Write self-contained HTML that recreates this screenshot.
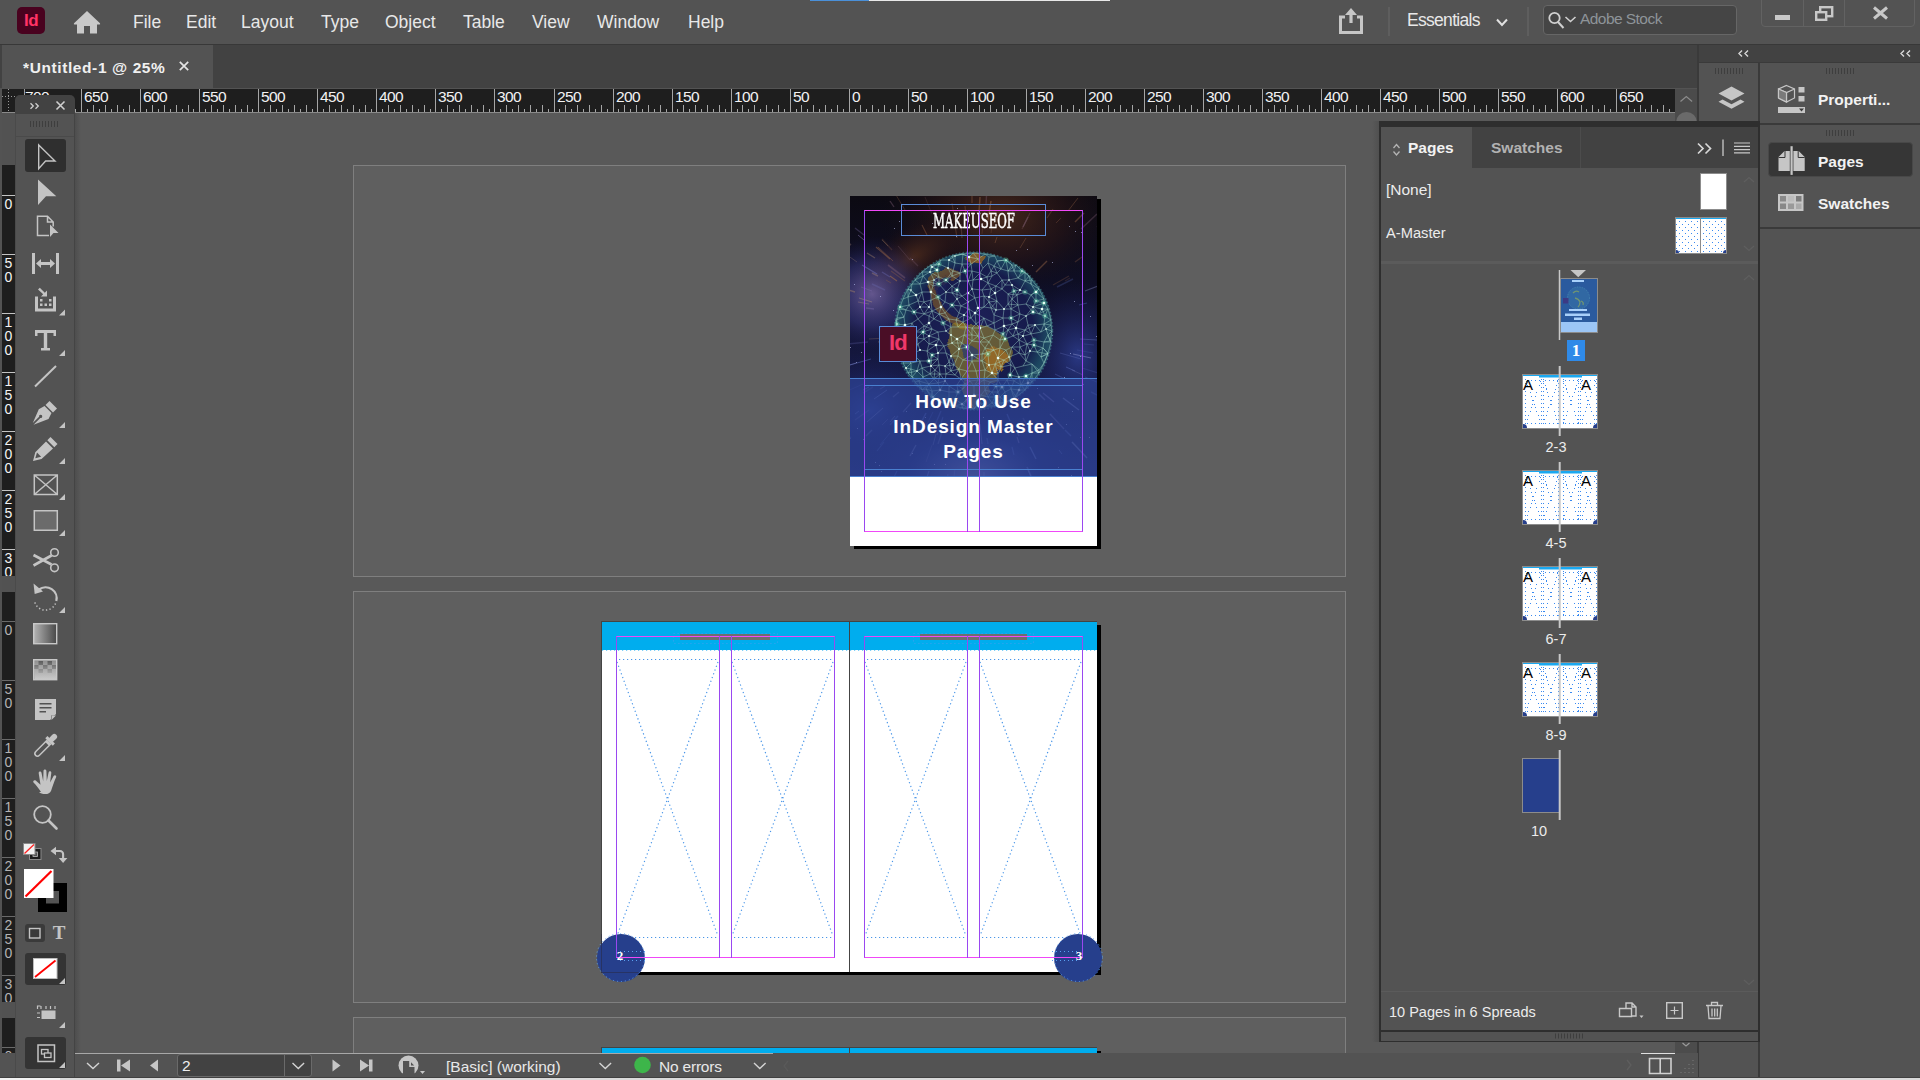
<!DOCTYPE html>
<html lang="en">
<head>
<meta charset="utf-8">
<title>InDesign - Untitled-1</title>
<style>
*{box-sizing:border-box;margin:0;padding:0}
html,body{width:1920px;height:1080px;overflow:hidden;background:#535353;font-family:"Liberation Sans",sans-serif;color:#e6e6e6}
.abs{position:absolute}
#app{position:absolute;left:0;top:0;width:1920px;height:1080px;overflow:hidden;background:#535353}
/* top bar */
#topbar{left:0;top:0;width:1920px;height:44px;background:#535353}
#topline{left:0;top:44px;width:1920px;height:1px;background:#383838}
.menu{top:10px;font-size:17.5px;line-height:24px;color:#e8e8e8;white-space:nowrap}
/* tab bar */
#tabbar{left:0;top:45px;width:1698px;height:43px;background:#424242}
#tab{left:2px;top:45px;width:211px;height:43px;background:#535353}
#tabtxt{left:23px;top:58px;font-size:15.5px;letter-spacing:0.6px;font-weight:bold;line-height:20px;color:#f0f0f0;white-space:nowrap}
#hruler i{position:absolute;width:1px;background:#a6a6a6}
#vruler b{position:absolute;left:0;width:13px;height:1px}
/* rulers */
#hruler{left:2px;top:89px;width:1673px;height:23px;background:#1e1e1e;overflow:hidden}
#hrulerline{left:2px;top:112px;width:1673px;height:1px;background:#8a8a8a}
#vruler{left:2px;top:113px;width:13px;height:940px;background:#1e1e1e;overflow:hidden}
.rl{position:absolute;top:0px;letter-spacing:-0.6px;font-size:15.5px;line-height:16px;color:#f2f2f2;white-space:nowrap}
.vl{position:absolute;left:0px;width:13px;font-size:14px;line-height:12px;color:#f2f2f2;text-align:center}
/* canvas */
#canvas{left:15px;top:113px;width:1660px;height:940px;background:#595959;overflow:hidden}
.paste{position:absolute;width:993px;height:412px;background:#5f5f5f;border:1px solid #7f7f7f}
/* status bar */
#status{left:0;top:1053px;width:1698px;height:24px;background:#535353}
#bottomline{left:0;top:1077px;width:1920px;height:3px;background:#dadada;border-top:1px solid #404040}
/* right docks */
#dockhdr{left:1699px;top:45px;width:221px;height:18px;background:#424242}
#dock1{left:1700px;top:63px;width:58px;height:1014px;background:#535353}
#dock2{left:1760px;top:63px;width:160px;height:1014px;background:#535353}
.sep{background:#3a3a3a}
.dk{font-weight:bold;font-size:15.500px;line-height:20px;color:#f2f2f2;white-space:nowrap}
.pt{line-height:20px;color:#ececec;white-space:nowrap}
</style>
</head>
<body>
<div id="app">
<!-- TOPBAR -->
<div id="topbar" class="abs"></div>
<div class="abs" style="left:810px;top:0;width:59px;height:1px;background:#4a90d9"></div>
<div class="abs" style="left:869px;top:0;width:241px;height:1px;background:#e8e8e8"></div>
<div id="topline" class="abs"></div>
<div class="abs" id="idlogo" style="left:17px;top:7px;width:28px;height:27px;border-radius:5px;background:#49021f"></div>
<div class="abs" style="left:17px;top:7px;width:28px;height:27px;text-align:center;font-weight:bold;font-size:17px;line-height:27px;color:#ff3366;letter-spacing:-0.5px">Id</div>
<svg class="abs" style="left:72px;top:9px" width="30" height="26" viewBox="0 0 30 26"><path d="M15 2 L28 14.2 Q28.6 15.4 27.4 15.6 L25 15.6 L25 24.5 L18 24.5 L18 17 L12 17 L12 24.5 L5 24.5 L5 15.6 L2.6 15.6 Q1.4 15.4 2 14.2 Z" fill="#c9c9c9"/></svg>
<div class="abs menu" style="left:133px">File</div>
<div class="abs menu" style="left:186px">Edit</div>
<div class="abs menu" style="left:241px">Layout</div>
<div class="abs menu" style="left:321px">Type</div>
<div class="abs menu" style="left:385px">Object</div>
<div class="abs menu" style="left:463px">Table</div>
<div class="abs menu" style="left:532px">View</div>
<div class="abs menu" style="left:597px">Window</div>
<div class="abs menu" style="left:688px">Help</div>
<!-- share -->
<svg class="abs" style="left:1337px;top:6px" width="28" height="30" viewBox="0 0 28 30"><path d="M8 11 H3.5 V26.5 H24.5 V11 H20" fill="none" stroke="#c6c6c6" stroke-width="3"/><path d="M14 2 L20 9 H15.600 V17 H12.400 V9 H8 Z" fill="#c6c6c6"/></svg>
<div class="abs" style="left:1388px;top:7px;width:2px;height:29px;background:#5e5e5e"></div>
<div class="abs menu" style="left:1407px;top:8px;font-size:17.5px;letter-spacing:-0.7px">Essentials</div>
<svg class="abs" style="left:1495px;top:17px" width="14" height="11" viewBox="0 0 14 11"><path d="M2 2.5 L7 8 L12 2.5" fill="none" stroke="#e0e0e0" stroke-width="2"/></svg>
<div class="abs" style="left:1527px;top:7px;width:2px;height:29px;background:#5e5e5e"></div>
<div class="abs" style="left:1543px;top:5px;width:194px;height:30px;border:1px solid #666;border-radius:4px;background:#454545"></div>
<svg class="abs" style="left:1546px;top:9px" width="34" height="22" viewBox="0 0 34 22"><circle cx="8.5" cy="9" r="5.2" fill="none" stroke="#d0d0d0" stroke-width="1.8"/><path d="M12 13 L17.5 19" stroke="#d0d0d0" stroke-width="2"/><path d="M19.5 8 L24.5 12.5 L29.5 8" fill="none" stroke="#d0d0d0" stroke-width="1.6"/></svg>
<div class="abs" style="left:1580px;top:8px;font-size:15.5px;letter-spacing:-0.55px;line-height:22px;color:#8e9499;white-space:nowrap">Adobe Stock</div>
<!-- window controls -->
<div class="abs" style="left:1761px;top:-4px;width:154px;height:31px;border:1px solid #626262;border-radius:4px"></div>
<div class="abs" style="left:1803px;top:0;width:1px;height:26px;background:#626262"></div>
<div class="abs" style="left:1844px;top:0;width:1px;height:26px;background:#626262"></div>
<div class="abs" style="left:1775px;top:15px;width:15px;height:5px;background:#c8c8c8"></div>
<svg class="abs" style="left:1814px;top:5px" width="20" height="17" viewBox="0 0 20 17"><rect x="6.2" y="2.2" width="12" height="9" fill="none" stroke="#c8c8c8" stroke-width="2.4"/><rect x="2.2" y="7.2" width="10" height="7.6" fill="#535353" stroke="#c8c8c8" stroke-width="2.4"/></svg>
<svg class="abs" style="left:1872px;top:6px" width="17" height="14" viewBox="0 0 17 14"><path d="M2 1.5 L15 12.5 M15 1.5 L2 12.5" stroke="#c8c8c8" stroke-width="3"/></svg>

<!-- TABBAR -->
<div id="tabbar" class="abs"></div>
<div id="tab" class="abs"></div>
<div id="tabtxt" class="abs">*Untitled-1 @ 25%</div>
<svg class="abs" style="left:178px;top:60px" width="12" height="12" viewBox="0 0 12 12"><path d="M1.8 1.8 L10.2 10.2 M10.2 1.8 L1.8 10.2" stroke="#e4e4e4" stroke-width="1.7"/></svg>
<!-- scrollbar column right of ruler -->
<div class="abs" style="left:1675px;top:89px;width:22px;height:964px;background:#4b4b4b"></div>
<svg class="abs" style="left:1675px;top:89px" width="22" height="40" viewBox="0 0 22 40" fill="none"><path d="M5.500 12.500l5.800-5l5.800 5" stroke="#8c8c8c" stroke-width="1.200"/><rect x="1" y="23" width="21" height="60" rx="10.500" fill="#6a6a6a"/></svg>
<div class="abs" style="left:1697px;top:45px;width:2px;height:1032px;background:#3a3a3a"></div>

<!-- RULERS -->
<div id="hruler" class="abs">
<i style="left:20px;top:0;height:23px"></i><span class="rl" style="left:23px">700</span><i style="left:26px;top:20px;height:3px"></i><i style="left:32px;top:16px;height:7px"></i><i style="left:38px;top:20px;height:3px"></i><i style="left:44px;top:16px;height:7px"></i><i style="left:50px;top:20px;height:3px"></i><i style="left:56px;top:16px;height:7px"></i><i style="left:62px;top:20px;height:3px"></i><i style="left:68px;top:16px;height:7px"></i><i style="left:73px;top:20px;height:3px"></i><i style="left:79px;top:0;height:23px"></i><span class="rl" style="left:82px">650</span><i style="left:85px;top:20px;height:3px"></i><i style="left:91px;top:16px;height:7px"></i><i style="left:97px;top:20px;height:3px"></i><i style="left:103px;top:16px;height:7px"></i><i style="left:109px;top:20px;height:3px"></i><i style="left:115px;top:16px;height:7px"></i><i style="left:121px;top:20px;height:3px"></i><i style="left:127px;top:16px;height:7px"></i><i style="left:132px;top:20px;height:3px"></i><i style="left:138px;top:0;height:23px"></i><span class="rl" style="left:141px">600</span><i style="left:144px;top:20px;height:3px"></i><i style="left:150px;top:16px;height:7px"></i><i style="left:156px;top:20px;height:3px"></i><i style="left:162px;top:16px;height:7px"></i><i style="left:168px;top:20px;height:3px"></i><i style="left:174px;top:16px;height:7px"></i><i style="left:180px;top:20px;height:3px"></i><i style="left:186px;top:16px;height:7px"></i><i style="left:191px;top:20px;height:3px"></i><i style="left:197px;top:0;height:23px"></i><span class="rl" style="left:200px">550</span><i style="left:203px;top:20px;height:3px"></i><i style="left:209px;top:16px;height:7px"></i><i style="left:215px;top:20px;height:3px"></i><i style="left:221px;top:16px;height:7px"></i><i style="left:227px;top:20px;height:3px"></i><i style="left:233px;top:16px;height:7px"></i><i style="left:239px;top:20px;height:3px"></i><i style="left:245px;top:16px;height:7px"></i><i style="left:250px;top:20px;height:3px"></i><i style="left:256px;top:0;height:23px"></i><span class="rl" style="left:259px">500</span><i style="left:262px;top:20px;height:3px"></i><i style="left:268px;top:16px;height:7px"></i><i style="left:274px;top:20px;height:3px"></i><i style="left:280px;top:16px;height:7px"></i><i style="left:286px;top:20px;height:3px"></i><i style="left:292px;top:16px;height:7px"></i><i style="left:298px;top:20px;height:3px"></i><i style="left:304px;top:16px;height:7px"></i><i style="left:310px;top:20px;height:3px"></i><i style="left:315px;top:0;height:23px"></i><span class="rl" style="left:318px">450</span><i style="left:321px;top:20px;height:3px"></i><i style="left:327px;top:16px;height:7px"></i><i style="left:333px;top:20px;height:3px"></i><i style="left:339px;top:16px;height:7px"></i><i style="left:345px;top:20px;height:3px"></i><i style="left:351px;top:16px;height:7px"></i><i style="left:357px;top:20px;height:3px"></i><i style="left:363px;top:16px;height:7px"></i><i style="left:369px;top:20px;height:3px"></i><i style="left:374px;top:0;height:23px"></i><span class="rl" style="left:377px">400</span><i style="left:380px;top:20px;height:3px"></i><i style="left:386px;top:16px;height:7px"></i><i style="left:392px;top:20px;height:3px"></i><i style="left:398px;top:16px;height:7px"></i><i style="left:404px;top:20px;height:3px"></i><i style="left:410px;top:16px;height:7px"></i><i style="left:416px;top:20px;height:3px"></i><i style="left:422px;top:16px;height:7px"></i><i style="left:428px;top:20px;height:3px"></i><i style="left:433px;top:0;height:23px"></i><span class="rl" style="left:436px">350</span><i style="left:439px;top:20px;height:3px"></i><i style="left:445px;top:16px;height:7px"></i><i style="left:451px;top:20px;height:3px"></i><i style="left:457px;top:16px;height:7px"></i><i style="left:463px;top:20px;height:3px"></i><i style="left:469px;top:16px;height:7px"></i><i style="left:475px;top:20px;height:3px"></i><i style="left:481px;top:16px;height:7px"></i><i style="left:487px;top:20px;height:3px"></i><i style="left:492px;top:0;height:23px"></i><span class="rl" style="left:495px">300</span><i style="left:498px;top:20px;height:3px"></i><i style="left:504px;top:16px;height:7px"></i><i style="left:510px;top:20px;height:3px"></i><i style="left:516px;top:16px;height:7px"></i><i style="left:522px;top:20px;height:3px"></i><i style="left:528px;top:16px;height:7px"></i><i style="left:534px;top:20px;height:3px"></i><i style="left:540px;top:16px;height:7px"></i><i style="left:546px;top:20px;height:3px"></i><i style="left:552px;top:0;height:23px"></i><span class="rl" style="left:555px">250</span><i style="left:557px;top:20px;height:3px"></i><i style="left:563px;top:16px;height:7px"></i><i style="left:569px;top:20px;height:3px"></i><i style="left:575px;top:16px;height:7px"></i><i style="left:581px;top:20px;height:3px"></i><i style="left:587px;top:16px;height:7px"></i><i style="left:593px;top:20px;height:3px"></i><i style="left:599px;top:16px;height:7px"></i><i style="left:605px;top:20px;height:3px"></i><i style="left:611px;top:0;height:23px"></i><span class="rl" style="left:614px">200</span><i style="left:616px;top:20px;height:3px"></i><i style="left:622px;top:16px;height:7px"></i><i style="left:628px;top:20px;height:3px"></i><i style="left:634px;top:16px;height:7px"></i><i style="left:640px;top:20px;height:3px"></i><i style="left:646px;top:16px;height:7px"></i><i style="left:652px;top:20px;height:3px"></i><i style="left:658px;top:16px;height:7px"></i><i style="left:664px;top:20px;height:3px"></i><i style="left:670px;top:0;height:23px"></i><span class="rl" style="left:673px">150</span><i style="left:675px;top:20px;height:3px"></i><i style="left:681px;top:16px;height:7px"></i><i style="left:687px;top:20px;height:3px"></i><i style="left:693px;top:16px;height:7px"></i><i style="left:699px;top:20px;height:3px"></i><i style="left:705px;top:16px;height:7px"></i><i style="left:711px;top:20px;height:3px"></i><i style="left:717px;top:16px;height:7px"></i><i style="left:723px;top:20px;height:3px"></i><i style="left:729px;top:0;height:23px"></i><span class="rl" style="left:732px">100</span><i style="left:735px;top:20px;height:3px"></i><i style="left:740px;top:16px;height:7px"></i><i style="left:746px;top:20px;height:3px"></i><i style="left:752px;top:16px;height:7px"></i><i style="left:758px;top:20px;height:3px"></i><i style="left:764px;top:16px;height:7px"></i><i style="left:770px;top:20px;height:3px"></i><i style="left:776px;top:16px;height:7px"></i><i style="left:782px;top:20px;height:3px"></i><i style="left:788px;top:0;height:23px"></i><span class="rl" style="left:791px">50</span><i style="left:794px;top:20px;height:3px"></i><i style="left:799px;top:16px;height:7px"></i><i style="left:805px;top:20px;height:3px"></i><i style="left:811px;top:16px;height:7px"></i><i style="left:817px;top:20px;height:3px"></i><i style="left:823px;top:16px;height:7px"></i><i style="left:829px;top:20px;height:3px"></i><i style="left:835px;top:16px;height:7px"></i><i style="left:841px;top:20px;height:3px"></i><i style="left:847px;top:0;height:23px"></i><span class="rl" style="left:850px">0</span><i style="left:853px;top:20px;height:3px"></i><i style="left:858px;top:16px;height:7px"></i><i style="left:864px;top:20px;height:3px"></i><i style="left:870px;top:16px;height:7px"></i><i style="left:876px;top:20px;height:3px"></i><i style="left:882px;top:16px;height:7px"></i><i style="left:888px;top:20px;height:3px"></i><i style="left:894px;top:16px;height:7px"></i><i style="left:900px;top:20px;height:3px"></i><i style="left:906px;top:0;height:23px"></i><span class="rl" style="left:909px">50</span><i style="left:912px;top:20px;height:3px"></i><i style="left:917px;top:16px;height:7px"></i><i style="left:923px;top:20px;height:3px"></i><i style="left:929px;top:16px;height:7px"></i><i style="left:935px;top:20px;height:3px"></i><i style="left:941px;top:16px;height:7px"></i><i style="left:947px;top:20px;height:3px"></i><i style="left:953px;top:16px;height:7px"></i><i style="left:959px;top:20px;height:3px"></i><i style="left:965px;top:0;height:23px"></i><span class="rl" style="left:968px">100</span><i style="left:971px;top:20px;height:3px"></i><i style="left:977px;top:16px;height:7px"></i><i style="left:982px;top:20px;height:3px"></i><i style="left:988px;top:16px;height:7px"></i><i style="left:994px;top:20px;height:3px"></i><i style="left:1000px;top:16px;height:7px"></i><i style="left:1006px;top:20px;height:3px"></i><i style="left:1012px;top:16px;height:7px"></i><i style="left:1018px;top:20px;height:3px"></i><i style="left:1024px;top:0;height:23px"></i><span class="rl" style="left:1027px">150</span><i style="left:1030px;top:20px;height:3px"></i><i style="left:1036px;top:16px;height:7px"></i><i style="left:1041px;top:20px;height:3px"></i><i style="left:1047px;top:16px;height:7px"></i><i style="left:1053px;top:20px;height:3px"></i><i style="left:1059px;top:16px;height:7px"></i><i style="left:1065px;top:20px;height:3px"></i><i style="left:1071px;top:16px;height:7px"></i><i style="left:1077px;top:20px;height:3px"></i><i style="left:1083px;top:0;height:23px"></i><span class="rl" style="left:1086px">200</span><i style="left:1089px;top:20px;height:3px"></i><i style="left:1095px;top:16px;height:7px"></i><i style="left:1100px;top:20px;height:3px"></i><i style="left:1106px;top:16px;height:7px"></i><i style="left:1112px;top:20px;height:3px"></i><i style="left:1118px;top:16px;height:7px"></i><i style="left:1124px;top:20px;height:3px"></i><i style="left:1130px;top:16px;height:7px"></i><i style="left:1136px;top:20px;height:3px"></i><i style="left:1142px;top:0;height:23px"></i><span class="rl" style="left:1145px">250</span><i style="left:1148px;top:20px;height:3px"></i><i style="left:1154px;top:16px;height:7px"></i><i style="left:1159px;top:20px;height:3px"></i><i style="left:1165px;top:16px;height:7px"></i><i style="left:1171px;top:20px;height:3px"></i><i style="left:1177px;top:16px;height:7px"></i><i style="left:1183px;top:20px;height:3px"></i><i style="left:1189px;top:16px;height:7px"></i><i style="left:1195px;top:20px;height:3px"></i><i style="left:1201px;top:0;height:23px"></i><span class="rl" style="left:1204px">300</span><i style="left:1207px;top:20px;height:3px"></i><i style="left:1213px;top:16px;height:7px"></i><i style="left:1219px;top:20px;height:3px"></i><i style="left:1224px;top:16px;height:7px"></i><i style="left:1230px;top:20px;height:3px"></i><i style="left:1236px;top:16px;height:7px"></i><i style="left:1242px;top:20px;height:3px"></i><i style="left:1248px;top:16px;height:7px"></i><i style="left:1254px;top:20px;height:3px"></i><i style="left:1260px;top:0;height:23px"></i><span class="rl" style="left:1263px">350</span><i style="left:1266px;top:20px;height:3px"></i><i style="left:1272px;top:16px;height:7px"></i><i style="left:1278px;top:20px;height:3px"></i><i style="left:1283px;top:16px;height:7px"></i><i style="left:1289px;top:20px;height:3px"></i><i style="left:1295px;top:16px;height:7px"></i><i style="left:1301px;top:20px;height:3px"></i><i style="left:1307px;top:16px;height:7px"></i><i style="left:1313px;top:20px;height:3px"></i><i style="left:1319px;top:0;height:23px"></i><span class="rl" style="left:1322px">400</span><i style="left:1325px;top:20px;height:3px"></i><i style="left:1331px;top:16px;height:7px"></i><i style="left:1337px;top:20px;height:3px"></i><i style="left:1342px;top:16px;height:7px"></i><i style="left:1348px;top:20px;height:3px"></i><i style="left:1354px;top:16px;height:7px"></i><i style="left:1360px;top:20px;height:3px"></i><i style="left:1366px;top:16px;height:7px"></i><i style="left:1372px;top:20px;height:3px"></i><i style="left:1378px;top:0;height:23px"></i><span class="rl" style="left:1381px">450</span><i style="left:1384px;top:20px;height:3px"></i><i style="left:1390px;top:16px;height:7px"></i><i style="left:1396px;top:20px;height:3px"></i><i style="left:1401px;top:16px;height:7px"></i><i style="left:1407px;top:20px;height:3px"></i><i style="left:1413px;top:16px;height:7px"></i><i style="left:1419px;top:20px;height:3px"></i><i style="left:1425px;top:16px;height:7px"></i><i style="left:1431px;top:20px;height:3px"></i><i style="left:1437px;top:0;height:23px"></i><span class="rl" style="left:1440px">500</span><i style="left:1443px;top:20px;height:3px"></i><i style="left:1449px;top:16px;height:7px"></i><i style="left:1455px;top:20px;height:3px"></i><i style="left:1461px;top:16px;height:7px"></i><i style="left:1466px;top:20px;height:3px"></i><i style="left:1472px;top:16px;height:7px"></i><i style="left:1478px;top:20px;height:3px"></i><i style="left:1484px;top:16px;height:7px"></i><i style="left:1490px;top:20px;height:3px"></i><i style="left:1496px;top:0;height:23px"></i><span class="rl" style="left:1499px">550</span><i style="left:1502px;top:20px;height:3px"></i><i style="left:1508px;top:16px;height:7px"></i><i style="left:1514px;top:20px;height:3px"></i><i style="left:1520px;top:16px;height:7px"></i><i style="left:1525px;top:20px;height:3px"></i><i style="left:1531px;top:16px;height:7px"></i><i style="left:1537px;top:20px;height:3px"></i><i style="left:1543px;top:16px;height:7px"></i><i style="left:1549px;top:20px;height:3px"></i><i style="left:1555px;top:0;height:23px"></i><span class="rl" style="left:1558px">600</span><i style="left:1561px;top:20px;height:3px"></i><i style="left:1567px;top:16px;height:7px"></i><i style="left:1573px;top:20px;height:3px"></i><i style="left:1579px;top:16px;height:7px"></i><i style="left:1584px;top:20px;height:3px"></i><i style="left:1590px;top:16px;height:7px"></i><i style="left:1596px;top:20px;height:3px"></i><i style="left:1602px;top:16px;height:7px"></i><i style="left:1608px;top:20px;height:3px"></i><i style="left:1614px;top:0;height:23px"></i><span class="rl" style="left:1617px">650</span><i style="left:1620px;top:20px;height:3px"></i><i style="left:1626px;top:16px;height:7px"></i><i style="left:1632px;top:20px;height:3px"></i><i style="left:1638px;top:16px;height:7px"></i><i style="left:1643px;top:20px;height:3px"></i><i style="left:1649px;top:16px;height:7px"></i><i style="left:1655px;top:20px;height:3px"></i><i style="left:1661px;top:16px;height:7px"></i><i style="left:1667px;top:20px;height:3px"></i>
<div style="position:absolute;left:0;top:0;width:23px;height:24px;background:#1e1e1e;border-right:1px solid #9a9a9a"></div>
<div style="position:absolute;left:6px;top:0;width:1px;height:24px;background:repeating-linear-gradient(to bottom,#9a9a9a 0 1px,transparent 1px 3px)"></div>
<div style="position:absolute;left:0;top:7px;width:23px;height:1px;background:repeating-linear-gradient(to right,#9a9a9a 0 1px,transparent 1px 3px)"></div>
</div>
<div id="hrulerline" class="abs"></div>
<div id="vruler" class="abs">
<div style="position:absolute;left:0;top:0;width:13px;height:52px;background:#525252"></div>
<div style="position:absolute;left:0;top:52px;width:13px;height:411px;overflow:hidden"><div style="position:absolute;left:0;top:-52px;width:13px;height:2000px"><b style="top:82px;background:#c4c4c4"></b><span class="vl" style="top:85px;color:#f4f4f4">0</span><b style="top:141px;background:#c4c4c4"></b><span class="vl" style="top:144px;color:#f4f4f4">5</span><span class="vl" style="top:158px;color:#f4f4f4">0</span><b style="top:200px;background:#c4c4c4"></b><span class="vl" style="top:203px;color:#f4f4f4">1</span><span class="vl" style="top:217px;color:#f4f4f4">0</span><span class="vl" style="top:231px;color:#f4f4f4">0</span><b style="top:259px;background:#c4c4c4"></b><span class="vl" style="top:262px;color:#f4f4f4">1</span><span class="vl" style="top:276px;color:#f4f4f4">5</span><span class="vl" style="top:290px;color:#f4f4f4">0</span><b style="top:318px;background:#c4c4c4"></b><span class="vl" style="top:321px;color:#f4f4f4">2</span><span class="vl" style="top:335px;color:#f4f4f4">0</span><span class="vl" style="top:349px;color:#f4f4f4">0</span><b style="top:377px;background:#c4c4c4"></b><span class="vl" style="top:380px;color:#f4f4f4">2</span><span class="vl" style="top:394px;color:#f4f4f4">5</span><span class="vl" style="top:408px;color:#f4f4f4">0</span><b style="top:436px;background:#c4c4c4"></b><span class="vl" style="top:439px;color:#f4f4f4">3</span><span class="vl" style="top:453px;color:#f4f4f4">0</span><span class="vl" style="top:467px;color:#f4f4f4">0</span></div></div>
<div style="position:absolute;left:0;top:463px;width:13px;height:16px;background:#525252"></div>
<div style="position:absolute;left:0;top:479px;width:13px;height:410px;overflow:hidden"><div style="position:absolute;left:0;top:-479px;width:13px;height:2000px"><b style="top:508px;background:#6a6a6a"></b><span class="vl" style="top:511px;color:#b4b4b4">0</span><b style="top:567px;background:#6a6a6a"></b><span class="vl" style="top:570px;color:#b4b4b4">5</span><span class="vl" style="top:584px;color:#b4b4b4">0</span><b style="top:626px;background:#6a6a6a"></b><span class="vl" style="top:629px;color:#b4b4b4">1</span><span class="vl" style="top:643px;color:#b4b4b4">0</span><span class="vl" style="top:657px;color:#b4b4b4">0</span><b style="top:685px;background:#6a6a6a"></b><span class="vl" style="top:688px;color:#b4b4b4">1</span><span class="vl" style="top:702px;color:#b4b4b4">5</span><span class="vl" style="top:716px;color:#b4b4b4">0</span><b style="top:744px;background:#6a6a6a"></b><span class="vl" style="top:747px;color:#b4b4b4">2</span><span class="vl" style="top:761px;color:#b4b4b4">0</span><span class="vl" style="top:775px;color:#b4b4b4">0</span><b style="top:803px;background:#6a6a6a"></b><span class="vl" style="top:806px;color:#b4b4b4">2</span><span class="vl" style="top:820px;color:#b4b4b4">5</span><span class="vl" style="top:834px;color:#b4b4b4">0</span><b style="top:862px;background:#6a6a6a"></b><span class="vl" style="top:865px;color:#b4b4b4">3</span><span class="vl" style="top:879px;color:#b4b4b4">0</span><span class="vl" style="top:893px;color:#b4b4b4">0</span></div></div>
<div style="position:absolute;left:0;top:889px;width:13px;height:16px;background:#525252"></div>
<div style="position:absolute;left:0;top:905px;width:13px;height:35px;overflow:hidden"><div style="position:absolute;left:0;top:-905px;width:13px;height:2000px"><b style="top:934px;background:#6a6a6a"></b><span class="vl" style="top:937px;color:#b4b4b4">0</span></div></div>
</div>

<!-- CANVAS -->
<div id="canvas" class="abs"><div style="position:absolute;left:-15px;top:-113px;width:1920px;height:1080px">
<div class="paste" style="left:353px;top:165px"></div>
<div class="paste" style="left:353px;top:591px"></div>
<div class="paste" style="left:353px;top:1017px"></div>
<div class="abs" style="left:854px;top:199px;width:247px;height:350px;background:#000"></div>
<div class="abs" style="left:850px;top:196px;width:247px;height:350px;background:#fff;overflow:hidden">
<svg width="248" height="281" viewBox="0 0 248 281" preserveAspectRatio="none" style="position:absolute;left:0;top:0;display:block"><defs><radialGradient id="cg1" cx="0.5" cy="0.5" r="0.5"><stop offset="0" stop-color="#4a2a1c" stop-opacity="0.95"/><stop offset="0.55" stop-color="#2a1616" stop-opacity="0.6"/><stop offset="1" stop-color="#120c14" stop-opacity="0"/></radialGradient><radialGradient id="cg2" cx="0.5" cy="0.5" r="0.5"><stop offset="0" stop-color="#7868a8" stop-opacity="0.8"/><stop offset="0.55" stop-color="#3c3c86" stop-opacity="0.5"/><stop offset="1" stop-color="#1a1a50" stop-opacity="0"/></radialGradient><radialGradient id="cg3" cx="0.5" cy="0.5" r="0.5"><stop offset="0" stop-color="#2c3c8c" stop-opacity="0.9"/><stop offset="1" stop-color="#14184a" stop-opacity="0"/></radialGradient><radialGradient id="cg4" cx="0.5" cy="0.5" r="0.5"><stop offset="0" stop-color="#9088b0" stop-opacity="0.75"/><stop offset="1" stop-color="#5a5a98" stop-opacity="0"/></radialGradient><radialGradient id="cgl" cx="0.5" cy="0.48" r="0.52"><stop offset="0" stop-color="#1e2258"/><stop offset="0.72" stop-color="#161b4c"/><stop offset="0.9" stop-color="#1c4660"/><stop offset="1" stop-color="#2b6e78" stop-opacity="0.5"/></radialGradient><linearGradient id="cbt" x1="0" y1="0" x2="0" y2="1"><stop offset="0" stop-color="#0c0a12"/><stop offset="0.3" stop-color="#0e0e24"/><stop offset="0.65" stop-color="#161a46"/><stop offset="1" stop-color="#222a68"/></linearGradient><clipPath id="ccp"><circle cx="123.5" cy="135" r="79"/></clipPath><filter id="crf" x="-10%" y="-10%" width="120%" height="120%"><feTurbulence type="fractalNoise" baseFrequency="0.09" numOctaves="2" seed="4"/><feDisplacementMap in="SourceGraphic" scale="9"/></filter></defs><rect width="248" height="281" fill="url(#cbt)"/><ellipse cx="150" cy="20" rx="120" ry="80" fill="url(#cg1)"/><ellipse cx="62" cy="62" rx="70" ry="34" transform="rotate(-32 62 62)" fill="url(#cg1)"/><ellipse cx="22" cy="98" rx="62" ry="58" fill="url(#cg2)"/><ellipse cx="228" cy="160" rx="55" ry="75" fill="url(#cg3)"/><ellipse cx="20" cy="215" rx="70" ry="60" fill="url(#cg3)"/><ellipse cx="124" cy="262" rx="150" ry="62" fill="url(#cg3)"/><ellipse cx="124" cy="285" rx="70" ry="45" fill="url(#cg4)"/><g><path d="M-0 173L-20 179" stroke="#4a5aa8" stroke-opacity="0.41" stroke-width="1.5"/><path d="M178 274L183 286" stroke="#8a90c8" stroke-opacity="0.53" stroke-width="0.8"/><path d="M93 221L87 239" stroke="#5a6ab8" stroke-opacity="0.46" stroke-width="1.1"/><path d="M-14 177L-29 182" stroke="#8a90c8" stroke-opacity="0.26" stroke-width="1.2"/><path d="M216 171L225 175" stroke="#5a6ab8" stroke-opacity="0.52" stroke-width="1.0"/><path d="M40 81L32 76" stroke="#6a6ab0" stroke-opacity="0.42" stroke-width="1.3"/><path d="M21 163L-0 169" stroke="#5a6ab8" stroke-opacity="0.50" stroke-width="1.0"/><path d="M137 242L138 248" stroke="#5a6ab8" stroke-opacity="0.39" stroke-width="1.5"/><path d="M1 241L-13 253" stroke="#5a6ab8" stroke-opacity="0.32" stroke-width="1.5"/><path d="M232 172L248 177" stroke="#4a5aa8" stroke-opacity="0.28" stroke-width="1.3"/><path d="M142 31L144 24" stroke="#6a4a4a" stroke-opacity="0.26" stroke-width="1.1"/><path d="M207 91L223 83" stroke="#5a6ab8" stroke-opacity="0.27" stroke-width="1.4"/><path d="M180 251L186 263" stroke="#6a78c0" stroke-opacity="0.59" stroke-width="1.4"/><path d="M23 191L13 197" stroke="#6a78c0" stroke-opacity="0.25" stroke-width="1.5"/><path d="M254 114L276 111" stroke="#5a6ab8" stroke-opacity="0.32" stroke-width="1.1"/><path d="M206 27L211 22" stroke="#a06a48" stroke-opacity="0.32" stroke-width="0.9"/><path d="M139 25L141 16" stroke="#8a5a40" stroke-opacity="0.28" stroke-width="0.9"/><path d="M68 70L60 62" stroke="#7a5a70" stroke-opacity="0.29" stroke-width="1.2"/><path d="M170 52L176 42" stroke="#a06a48" stroke-opacity="0.36" stroke-width="0.9"/><path d="M14 44L8 39" stroke="#8a78b8" stroke-opacity="0.49" stroke-width="1.0"/><path d="M34 145L28 146" stroke="#a08068" stroke-opacity="0.26" stroke-width="1.6"/><path d="M134 276L134 285" stroke="#8a90c8" stroke-opacity="0.42" stroke-width="1.2"/><path d="M271 65L277 62" stroke="#7a5a70" stroke-opacity="0.45" stroke-width="1.5"/><path d="M43 65L28 51" stroke="#a06a48" stroke-opacity="0.51" stroke-width="0.8"/><path d="M35 190L30 193" stroke="#7a70b0" stroke-opacity="0.38" stroke-width="1.2"/><path d="M200 218L214 233" stroke="#7a70b0" stroke-opacity="0.48" stroke-width="1.3"/><path d="M41 87L36 84" stroke="#8a5a40" stroke-opacity="0.42" stroke-width="1.0"/><path d="M91 215L85 229" stroke="#5a6ab8" stroke-opacity="0.42" stroke-width="1.4"/><path d="M54 285L52 290" stroke="#8a90c8" stroke-opacity="0.38" stroke-width="0.7"/><path d="M256 79L262 76" stroke="#6a4a4a" stroke-opacity="0.37" stroke-width="1.3"/><path d="M249 45L259 38" stroke="#8a5a40" stroke-opacity="0.55" stroke-width="1.2"/><path d="M42 54L32 43" stroke="#8a5a40" stroke-opacity="0.28" stroke-width="1.3"/><path d="M279 128L296 128" stroke="#4a5aa8" stroke-opacity="0.58" stroke-width="1.3"/><path d="M6 167L-7 171" stroke="#8a90c8" stroke-opacity="0.51" stroke-width="0.7"/><path d="M25 62L17 57" stroke="#a08068" stroke-opacity="0.42" stroke-width="1.3"/><path d="M215 85L220 82" stroke="#6a4a4a" stroke-opacity="0.30" stroke-width="1.3"/><path d="M-21 118L-31 117" stroke="#b09080" stroke-opacity="0.42" stroke-width="0.9"/><path d="M37 194L24 203" stroke="#6a78c0" stroke-opacity="0.56" stroke-width="1.0"/><path d="M28 80L22 77" stroke="#b09080" stroke-opacity="0.37" stroke-width="1.5"/><path d="M210 157L231 163" stroke="#6a78c0" stroke-opacity="0.29" stroke-width="1.1"/><path d="M259 67L269 62" stroke="#7a5a70" stroke-opacity="0.49" stroke-width="1.3"/><path d="M197 22L203 13" stroke="#8a5a40" stroke-opacity="0.35" stroke-width="1.2"/><path d="M77 39L72 29" stroke="#8a5a40" stroke-opacity="0.47" stroke-width="1.1"/><path d="M177 271L181 280" stroke="#6a78c0" stroke-opacity="0.53" stroke-width="1.6"/><path d="M193 197L204 206" stroke="#7a70b0" stroke-opacity="0.59" stroke-width="1.3"/><path d="M162 251L164 259" stroke="#5a6ab8" stroke-opacity="0.51" stroke-width="1.2"/><path d="M223 158L241 162" stroke="#8a90c8" stroke-opacity="0.49" stroke-width="1.2"/><path d="M14 39L5 32" stroke="#8a78b8" stroke-opacity="0.28" stroke-width="1.5"/><path d="M107 42L105 29" stroke="#8a5a40" stroke-opacity="0.38" stroke-width="1.2"/><path d="M231 33L247 18" stroke="#7a5a70" stroke-opacity="0.36" stroke-width="1.6"/><path d="M249 225L264 236" stroke="#5a6ab8" stroke-opacity="0.32" stroke-width="1.5"/><path d="M285 115L299 113" stroke="#7a70b0" stroke-opacity="0.34" stroke-width="1.3"/><path d="M248 147L253 148" stroke="#7a70b0" stroke-opacity="0.44" stroke-width="1.4"/><path d="M37 142L19 143" stroke="#a08068" stroke-opacity="0.40" stroke-width="0.7"/><path d="M-13 106L-33 102" stroke="#b09080" stroke-opacity="0.30" stroke-width="1.2"/><path d="M98 -15L96 -31" stroke="#7a5a70" stroke-opacity="0.45" stroke-width="1.3"/><path d="M129 16L130 1" stroke="#a06a48" stroke-opacity="0.43" stroke-width="1.5"/><path d="M22 95L11 91" stroke="#8a78b8" stroke-opacity="0.36" stroke-width="0.8"/><path d="M22 106L9 102" stroke="#b09080" stroke-opacity="0.44" stroke-width="1.2"/><path d="M55 82L38 69" stroke="#7a5a70" stroke-opacity="0.44" stroke-width="1.6"/><path d="M189 198L195 204" stroke="#8a90c8" stroke-opacity="0.41" stroke-width="1.5"/><path d="M160 24L163 15" stroke="#7a5a70" stroke-opacity="0.29" stroke-width="1.1"/><path d="M186 -9L192 -21" stroke="#6a4a4a" stroke-opacity="0.29" stroke-width="1.1"/><path d="M227 154L243 157" stroke="#5a6ab8" stroke-opacity="0.26" stroke-width="0.8"/><path d="M230 143L247 144" stroke="#6a78c0" stroke-opacity="0.47" stroke-width="0.8"/><path d="M112 42L111 28" stroke="#6a4a4a" stroke-opacity="0.50" stroke-width="1.3"/><path d="M186 76L197 65" stroke="#a06a48" stroke-opacity="0.44" stroke-width="1.5"/><path d="M24 113L16 112" stroke="#8a78b8" stroke-opacity="0.33" stroke-width="1.4"/><path d="M182 -11L186 -21" stroke="#6a4a4a" stroke-opacity="0.56" stroke-width="0.9"/><path d="M141 37L142 30" stroke="#a06a48" stroke-opacity="0.30" stroke-width="0.8"/><path d="M33 212L17 226" stroke="#8a90c8" stroke-opacity="0.53" stroke-width="0.8"/><path d="M9 215L5 218" stroke="#6a78c0" stroke-opacity="0.45" stroke-width="1.0"/><path d="M172 33L180 17" stroke="#6a4a4a" stroke-opacity="0.43" stroke-width="1.3"/><path d="M157 218L160 225" stroke="#5a6ab8" stroke-opacity="0.52" stroke-width="1.3"/><path d="M225 66L232 61" stroke="#8a5a40" stroke-opacity="0.32" stroke-width="1.5"/><path d="M282 125L289 125" stroke="#5a6ab8" stroke-opacity="0.30" stroke-width="1.3"/><path d="M205 178L215 183" stroke="#4a5aa8" stroke-opacity="0.43" stroke-width="1.1"/><path d="M55 85L41 75" stroke="#a06a48" stroke-opacity="0.31" stroke-width="1.1"/><path d="M116 18L115 10" stroke="#a06a48" stroke-opacity="0.28" stroke-width="1.4"/><path d="M83 216L74 234" stroke="#4a5aa8" stroke-opacity="0.45" stroke-width="0.9"/><path d="M27 78L12 69" stroke="#6a6ab0" stroke-opacity="0.57" stroke-width="1.4"/><path d="M150 -13L152 -24" stroke="#6a4a4a" stroke-opacity="0.56" stroke-width="1.3"/><path d="M139 -10L141 -22" stroke="#a06a48" stroke-opacity="0.27" stroke-width="1.0"/><path d="M40 152L29 154" stroke="#8a90c8" stroke-opacity="0.27" stroke-width="0.9"/><path d="M229 109L237 107" stroke="#4a5aa8" stroke-opacity="0.45" stroke-width="1.2"/><path d="M-3 240L-16 251" stroke="#5a6ab8" stroke-opacity="0.52" stroke-width="1.6"/><path d="M256 154L273 157" stroke="#7a70b0" stroke-opacity="0.41" stroke-width="1.2"/><path d="M133 -1L134 -6" stroke="#6a4a4a" stroke-opacity="0.34" stroke-width="1.5"/><path d="M5 96L-16 90" stroke="#a08068" stroke-opacity="0.47" stroke-width="1.4"/><path d="M241 196L257 204" stroke="#5a6ab8" stroke-opacity="0.39" stroke-width="1.5"/><path d="M1 242L-14 255" stroke="#8a90c8" stroke-opacity="0.46" stroke-width="0.8"/><path d="M235 95L248 90" stroke="#8a90c8" stroke-opacity="0.36" stroke-width="1.2"/><path d="M18 146L-2 148" stroke="#6a6ab0" stroke-opacity="0.26" stroke-width="1.4"/><path d="M7 66L-3 59" stroke="#b09080" stroke-opacity="0.27" stroke-width="1.0"/><path d="M19 214L5 224" stroke="#7a70b0" stroke-opacity="0.28" stroke-width="1.5"/><path d="M13 188L-7 197" stroke="#6a78c0" stroke-opacity="0.27" stroke-width="0.8"/><path d="M182 -12L184 -18" stroke="#a06a48" stroke-opacity="0.46" stroke-width="0.8"/><path d="M38 50L32 44" stroke="#a08068" stroke-opacity="0.37" stroke-width="0.8"/><path d="M61 207L53 216" stroke="#8a90c8" stroke-opacity="0.34" stroke-width="1.2"/><path d="M-5 206L-17 213" stroke="#6a78c0" stroke-opacity="0.58" stroke-width="1.4"/><path d="M130 228L132 248" stroke="#8a90c8" stroke-opacity="0.47" stroke-width="1.0"/><path d="M105 273L103 288" stroke="#8a90c8" stroke-opacity="0.32" stroke-width="1.0"/><path d="M134 296L135 309" stroke="#6a78c0" stroke-opacity="0.56" stroke-width="0.7"/><path d="M222 174L233 179" stroke="#8a90c8" stroke-opacity="0.26" stroke-width="0.9"/><path d="M98 278L94 298" stroke="#6a78c0" stroke-opacity="0.44" stroke-width="1.3"/><path d="M38 223L32 229" stroke="#7a70b0" stroke-opacity="0.42" stroke-width="0.8"/><path d="M225 26L234 17" stroke="#a06a48" stroke-opacity="0.41" stroke-width="1.4"/><path d="M49 196L43 201" stroke="#8a90c8" stroke-opacity="0.36" stroke-width="1.2"/><path d="M120 -24L119 -36" stroke="#6a4a4a" stroke-opacity="0.45" stroke-width="1.1"/><path d="M66 249L60 260" stroke="#8a90c8" stroke-opacity="0.42" stroke-width="1.3"/><path d="M79 275L77 281" stroke="#6a78c0" stroke-opacity="0.57" stroke-width="1.2"/><path d="M82 18L75 1" stroke="#6a4a4a" stroke-opacity="0.35" stroke-width="0.8"/><path d="M34 246L27 255" stroke="#5a6ab8" stroke-opacity="0.36" stroke-width="1.1"/><path d="M-7 47L-20 38" stroke="#6a6ab0" stroke-opacity="0.40" stroke-width="1.4"/><path d="M86 238L83 249" stroke="#8a90c8" stroke-opacity="0.34" stroke-width="1.0"/><path d="M48 220L40 229" stroke="#4a5aa8" stroke-opacity="0.53" stroke-width="1.4"/><path d="M45 220L40 226" stroke="#8a90c8" stroke-opacity="0.45" stroke-width="0.9"/><path d="M132 -20L133 -30" stroke="#8a5a40" stroke-opacity="0.33" stroke-width="0.8"/><path d="M182 226L185 230" stroke="#4a5aa8" stroke-opacity="0.27" stroke-width="1.2"/><path d="M145 47L147 41" stroke="#8a5a40" stroke-opacity="0.56" stroke-width="0.8"/><path d="M60 64L48 50" stroke="#7a5a70" stroke-opacity="0.34" stroke-width="0.9"/><path d="M136 9L137 -9" stroke="#7a5a70" stroke-opacity="0.37" stroke-width="1.4"/><path d="M76 217L70 229" stroke="#5a6ab8" stroke-opacity="0.50" stroke-width="1.5"/><path d="M-4 215L-18 224" stroke="#5a6ab8" stroke-opacity="0.53" stroke-width="1.5"/><path d="M247 31L259 21" stroke="#6a4a4a" stroke-opacity="0.50" stroke-width="1.4"/><path d="M19 191L13 194" stroke="#6a78c0" stroke-opacity="0.60" stroke-width="1.0"/><path d="M173 222L179 233" stroke="#7a70b0" stroke-opacity="0.35" stroke-width="1.5"/><path d="M-17 161L-27 162" stroke="#6a78c0" stroke-opacity="0.52" stroke-width="0.9"/><path d="M235 181L249 187" stroke="#5a6ab8" stroke-opacity="0.36" stroke-width="0.9"/><path d="M40 237L30 249" stroke="#4a5aa8" stroke-opacity="0.46" stroke-width="0.9"/><path d="M166 233L169 240" stroke="#7a70b0" stroke-opacity="0.47" stroke-width="1.5"/><path d="M-22 87L-35 83" stroke="#b09080" stroke-opacity="0.57" stroke-width="1.0"/><path d="M-31 88L-44 84" stroke="#8a78b8" stroke-opacity="0.39" stroke-width="0.9"/><path d="M222 246L237 262" stroke="#8a90c8" stroke-opacity="0.52" stroke-width="1.4"/><path d="M272 192L291 199" stroke="#4a5aa8" stroke-opacity="0.57" stroke-width="1.1"/><path d="M126 253L126 273" stroke="#4a5aa8" stroke-opacity="0.30" stroke-width="1.0"/><path d="M114 289L114 303" stroke="#8a90c8" stroke-opacity="0.34" stroke-width="1.2"/><path d="M209 254L212 258" stroke="#6a78c0" stroke-opacity="0.54" stroke-width="0.8"/><path d="M106 276L105 283" stroke="#4a5aa8" stroke-opacity="0.49" stroke-width="0.8"/><path d="M122 7L122 -7" stroke="#8a5a40" stroke-opacity="0.53" stroke-width="1.1"/><path d="M203 89L219 80" stroke="#a06a48" stroke-opacity="0.26" stroke-width="1.1"/><path d="M-37 141L-58 142" stroke="#6a6ab0" stroke-opacity="0.36" stroke-width="0.8"/><path d="M82 249L76 266" stroke="#7a70b0" stroke-opacity="0.28" stroke-width="0.8"/><path d="M55 14L46 -1" stroke="#8a5a40" stroke-opacity="0.48" stroke-width="0.7"/><path d="M22 234L16 240" stroke="#8a90c8" stroke-opacity="0.29" stroke-width="1.4"/><path d="M218 15L228 2" stroke="#a06a48" stroke-opacity="0.35" stroke-width="1.0"/><path d="M19 108L8 106" stroke="#b09080" stroke-opacity="0.44" stroke-width="0.8"/><path d="M167 241L169 247" stroke="#7a70b0" stroke-opacity="0.58" stroke-width="1.2"/><path d="M105 26L102 7" stroke="#8a5a40" stroke-opacity="0.29" stroke-width="1.3"/><path d="M215 234L221 240" stroke="#6a78c0" stroke-opacity="0.39" stroke-width="1.5"/><path d="M47 85L40 80" stroke="#a06a48" stroke-opacity="0.60" stroke-width="1.1"/><path d="M138 24L141 5" stroke="#a06a48" stroke-opacity="0.48" stroke-width="1.4"/><path d="M173 31L178 21" stroke="#7a5a70" stroke-opacity="0.47" stroke-width="1.4"/><path d="M40 63L26 51" stroke="#a06a48" stroke-opacity="0.48" stroke-width="1.2"/><path d="M234 148L244 149" stroke="#4a5aa8" stroke-opacity="0.29" stroke-width="1.0"/><path d="M-24 126L-43 125" stroke="#8a78b8" stroke-opacity="0.34" stroke-width="1.2"/><path d="M93 233L88 248" stroke="#8a90c8" stroke-opacity="0.30" stroke-width="1.3"/><path d="M249 125L266 123" stroke="#6a78c0" stroke-opacity="0.45" stroke-width="0.7"/><path d="M44 11L40 5" stroke="#7a5a70" stroke-opacity="0.45" stroke-width="1.3"/><path d="M47 275L42 285" stroke="#4a5aa8" stroke-opacity="0.56" stroke-width="1.1"/><path d="M110 33L109 18" stroke="#8a5a40" stroke-opacity="0.45" stroke-width="0.9"/><path d="M262 46L278 36" stroke="#a06a48" stroke-opacity="0.29" stroke-width="1.4"/><path d="M86 287L84 296" stroke="#8a90c8" stroke-opacity="0.38" stroke-width="0.8"/><path d="M1 49L-9 42" stroke="#b09080" stroke-opacity="0.31" stroke-width="1.6"/><path d="M251 84L261 80" stroke="#7a5a70" stroke-opacity="0.47" stroke-width="1.3"/><path d="M132 38L133 27" stroke="#8a5a40" stroke-opacity="0.30" stroke-width="1.0"/><path d="M35 94L22 88" stroke="#6a6ab0" stroke-opacity="0.34" stroke-width="1.5"/><path d="M263 184L279 189" stroke="#6a78c0" stroke-opacity="0.39" stroke-width="1.1"/><path d="M213 202L229 214" stroke="#8a90c8" stroke-opacity="0.52" stroke-width="1.4"/><path d="M-40 150L-60 151" stroke="#b09080" stroke-opacity="0.54" stroke-width="0.8"/></g><path d="M29 269h1v1h-1zM84 268h1v1h-1zM133 221h1v1h-1zM107 12h1v1h-1zM82 27h1v1h-1zM75 221h1v1h-1zM187 192h1v1h-1zM152 164h1v1h-1zM192 156h1v1h-1zM225 35h1v1h-1zM62 63h1v1h-1zM216 228h1v1h-1zM62 257h1v1h-1zM223 203h1v1h-1zM13 243h1v1h-1zM177 53h1v1h-1zM134 122h1v1h-1zM139 156h1v1h-1zM168 202h1v1h-1zM240 120h1v1h-1zM225 35h1v1h-1zM233 188h1v1h-1zM221 279h1v1h-1zM107 84h1v1h-1zM56 215h1v1h-1zM145 62h1v1h-1zM231 36h1v1h-1zM25 266h1v1h-1zM202 66h1v1h-1zM31 275h1v1h-1zM147 232h1v1h-1zM0 151h1v1h-1zM62 153h1v1h-1zM6 166h1v1h-1zM44 32h1v1h-1zM112 230h1v1h-1zM208 271h1v1h-1zM101 72h1v1h-1zM91 118h1v1h-1zM11 156h1v1h-1zM7 232h1v1h-1zM230 160h1v1h-1zM78 166h1v1h-1zM127 73h1v1h-1zM239 241h1v1h-1zM224 105h1v1h-1zM51 151h1v1h-1zM219 30h1v1h-1zM50 161h1v1h-1zM214 181h1v1h-1zM230 241h1v1h-1zM4 88h1v1h-1zM162 103h1v1h-1zM136 120h1v1h-1zM49 25h1v1h-1zM166 54h1v1h-1zM78 160h1v1h-1zM246 140h1v1h-1zM222 215h1v1h-1zM182 69h1v1h-1zM85 227h1v1h-1zM106 40h1v1h-1zM43 114h1v1h-1zM220 157h1v1h-1zM30 100h1v1h-1zM68 92h1v1h-1zM184 120h1v1h-1zM128 151h1v1h-1zM202 139h1v1h-1zM95 268h1v1h-1z" fill="#c8d0ff" fill-opacity="0.55"/><circle cx="123.5" cy="135" r="79" fill="url(#cgl)"/><g clip-path="url(#ccp)"><g filter="url(#crf)" fill="none" stroke-linejoin="round"><path d="M78 82q8-10 22-10q10 2 12 8l-10 4q-10 0-14 8q-2 10 4 18q8 10 18 14l8 8q-6 4-12-2q-10-4-18-14q-10-12-10-34z" fill="#a87018" fill-opacity="0.48"/><path d="M86 88q6-8 16-8q-8 6-8 16q2 12 12 20q-14-4-18-14q-4-8-2-14z" fill="#1c2258" fill-opacity="0.8"/><path d="M100 132q12-8 26-4q14 2 24 10q12 6 12 18q-4 14-16 22q-6 16-14 30l-12 6q-8-14-6-30q-10-12-14-28q-4-14 0-24z" fill="#a8921e" fill-opacity="0.52"/><path d="M140 150q12 0 18 10q-2 12-12 18q-8 2-10-8q-2-12 4-20z" fill="#c0741c" fill-opacity="0.5"/><path d="M112 150q8-4 14 2q2 10-6 14q-8-2-8-16z" fill="#2a3a70" fill-opacity="0.7"/><path d="M114 62q10-6 22-2q-2 8-14 8z" fill="#a86818" fill-opacity="0.7"/><path d="M62 190q8 6 10 16q-8-2-12-10z" fill="#c89018" fill-opacity="0.8"/></g></g><path d="M184 149L184 144M184 149L177 148M184 149L187 156M184 149L180 155M184 149L193 152M81 104L74 106M81 104L88 101M81 104L81 96M81 104L79 111M81 104L82 115M191 161L187 156M191 161L194 167M191 161L198 158M191 161L198 157M191 161L193 152M88 157L88 163M88 157L82 159M88 157L96 157M88 157L86 149M88 157L94 150M114 139L122 139M114 139L107 143M114 139L112 147M114 139L116 131M114 139L122 145M128 63L123 57M128 63L135 58M128 63L121 68M128 63L119 61M128 63L133 72M139 101L139 106M139 101L134 100M139 101L145 97M139 101L141 93M139 101L147 105M84 183L88 187M84 183L80 178M84 183L90 178M84 183L79 188M84 183L85 174M58 101L53 103M58 101L66 99M58 101L61 94M58 101L59 109M58 101L58 93M164 95L167 99M164 95L170 94M164 95L162 89M164 95L158 98M164 95L162 103M89 143L88 136M89 143L86 149M89 143L94 150M89 143L79 140M89 143L79 148M117 175L109 173M117 175L126 175M117 175L111 183M117 175L122 165M117 175L120 185M105 203L99 203M105 203L108 196M105 203L105 210M105 203L102 210M105 203L112 208M123 84L118 85M123 84L131 83M123 84L122 93M123 84L122 75M123 84L130 77M132 158L138 158M132 158L135 152M132 158L132 165M132 158L122 159M132 158L144 154M101 160L99 166M101 160L96 157M101 160L108 160M101 160L104 169M101 160L109 153M168 138L173 140M168 138L166 132M168 138L163 140M168 138L169 144M168 138L175 134M124 190L120 185M124 190L128 184M124 190L124 199M124 190L115 188M124 190L134 184M153 138L155 143M153 138L158 134M153 138L150 144M153 138L145 134M153 138L154 130M168 82L164 75M168 82L172 75M168 82L175 85M168 82L159 84M168 82L175 76M141 93L145 97M141 93L138 87M141 93L146 90M141 93L132 94M169 181L164 185M169 181L176 180M169 181L171 189M169 181L160 179M169 181L165 172M82 133L79 127M82 133L88 136M82 133L79 140M82 133L74 130M82 133L73 136M79 148L86 149M79 148L79 140M79 148L74 143M79 148L77 155M139 169L135 174M139 169L145 168M139 169L132 165M139 169L142 177M139 169L138 158M135 194L131 199M135 194L142 196M135 194L138 201M135 194L140 186M135 194L134 184M73 80L72 76M73 80L80 76M73 80L78 86M73 80L70 88M73 80L65 84M47 134L46 135M47 134L53 134M47 134L47 128M47 134L55 129M47 134L46 124M113 126L116 131M113 126L114 119M113 126L106 124M113 126L108 131M113 126L121 122M134 142L130 146M134 142L128 140M134 142L139 146M134 142L143 139M134 142L130 132M170 94L175 96M170 94L167 99M170 94L162 89M170 94L175 85M68 105L66 99M68 105L70 111M68 105L74 106M68 105L59 109M68 105L72 96M143 139L145 134M143 139L139 146M143 139L150 144M86 149L94 150M86 149L77 155M72 96L66 99M72 96L70 88M72 96L81 96M72 96L74 106M70 165L72 172M70 165L79 165M70 165L61 167M70 165L63 158M70 165L67 175M176 180L182 177M176 180L178 187M176 180L182 186M176 180L171 189M54 121L47 122M54 121L56 114M54 121L55 129M54 121L46 124M54 121L49 113M102 90L107 94M102 90L102 97M102 90L96 96M102 90L96 84M102 90L110 85M107 103L112 100M107 103L102 97M107 103L102 109M107 103L111 110M107 103L107 94M112 68L105 67M112 68L115 75M112 68L110 77M112 68L113 58M112 68L121 68M165 172L161 169M165 172L173 170M165 172L160 179M165 172L159 161M81 96L83 90M81 96L88 101M81 96L78 86M132 94L134 100M132 94L138 87M132 94L122 93M117 203L112 208M117 203L124 199M117 203L118 212M117 203L112 212M117 203L125 212M102 109L95 106M102 109L111 110M102 109L95 117M102 109L109 117M147 65L145 60M147 65L144 70M147 65L156 64M147 65L151 73M147 65L156 64M99 166L95 170M99 166L104 169M99 166L96 157M99 166L101 175M185 129L178 129M185 129L191 136M185 129L181 138M185 129L194 128M185 129L175 134M107 189L108 196M107 189L113 193M107 189L99 190M107 189L111 183M107 189L115 188M105 179L101 175M105 179L111 183M105 179L109 173M105 179L96 178M79 111L82 115M79 111L74 106M79 111L70 111M79 111L74 118M74 143L79 140M74 143L67 142M74 143L73 136M74 143L68 148M70 88L65 84M70 88L78 86M70 88L62 88M93 127L99 123M93 127L101 131M93 127L96 135M93 127L89 118M93 127L84 123M181 88L182 84M181 88L175 85M181 88L179 80M181 88L186 96M181 88L189 93M105 67L99 64M105 67L103 75M105 67L105 60M105 67L102 60M154 113L158 108M154 113L161 113M154 113L146 114M154 113L153 122M154 113L147 105M158 98L162 103M158 98L152 93M158 98L158 108M158 98L167 99M102 80L103 75M102 80L96 84M102 80L98 72M102 80L110 77M102 80L110 85M192 113L189 118M192 113L198 113M192 113L194 107M192 113L195 120M192 113L183 111M95 117L89 118M95 117L99 123M95 117L91 111M96 178L101 175M96 178L90 178M96 178L95 170M96 178L95 185M107 94L102 97M107 94L112 100M107 94L110 85M139 61L135 58M139 61L138 67M139 61L145 60M130 77L131 83M130 77L133 72M130 77L137 81M130 77L122 75M159 161L154 164M159 161L156 154M159 161L161 169M159 161L169 157M159 161L162 151M89 169L88 163M89 169L85 174M89 169L95 170M89 169L81 170M89 169L90 178M109 117L114 119M109 117L106 124M109 117L111 110M91 111L95 106M91 111L89 118M91 111L82 115M91 111L88 101M134 184L128 184M134 184L140 186M134 184L135 174M134 184L142 177M150 201L150 207M150 201L148 196M150 201L145 201M150 201L155 196M150 201L156 206M79 165L81 170M79 165L82 159M79 165L88 163M79 165L77 155M150 207L145 210M150 207L156 206M150 207L145 201M150 207L142 207M144 70L141 75M144 70L138 67M144 70L151 73M144 70L147 77M96 135L101 131M96 135L101 139M96 135L88 136M89 81L84 84M89 81L89 88M89 81L87 74M89 81L96 84M89 81L80 76M108 131L101 131M108 131L106 124M108 131L116 131M82 71L81 69M82 71L87 74M82 71L80 76M82 71L89 68M82 71L91 64M99 123L106 124M99 123L101 131M99 123L89 118M68 148L67 142M68 148L70 154M68 148L59 148M68 148L63 158M155 143L150 144M155 143L163 140M155 143L150 152M155 143L158 134M53 134L59 135M53 134L55 129M53 134L46 135M53 134L54 143M137 130L130 132M137 130L144 127M137 130L134 122M137 130L145 134M96 96L102 97M96 96L95 106M96 96L88 101M96 96L89 88M74 130L73 136M74 130L79 127M74 130L68 123M74 130L66 136M142 207L145 210M142 207L137 210M142 207L145 201M142 207L138 201M102 147L107 143M102 147L101 139M102 147L94 150M102 147L109 153M102 147L112 147M144 154L138 158M144 154L150 152M144 154L139 146M144 154L148 162M144 154L135 152M88 187L95 185M88 187L90 194M88 187L90 178M88 187L79 188M183 116L183 111M183 116L189 118M183 116L176 120M183 116L176 108M66 136L67 142M66 136L73 136M66 136L59 135M66 136L62 127M152 93L155 89M152 93L146 90M152 93L145 97M152 93L152 84M122 159L122 165M122 159L117 151M122 159L113 164M122 159L132 165M99 196L99 190M99 196L99 203M99 196L108 196M99 196L90 194M154 164L148 162M154 164L161 169M154 164L151 171M154 164L145 168M70 154L77 155M70 154L63 158M122 145L122 139M122 145L128 140M122 145L130 146M122 145L117 151M163 140L169 144M163 140L158 134M163 140L166 132M96 84L89 88M96 84L103 75M61 167L61 173M61 167L56 172M61 167L53 167M61 167L55 161M62 127L68 123M62 127L55 129M62 127L59 135M166 132L162 128M166 132L168 126M166 132L158 134M166 132L175 134M170 118L176 120M170 118L168 126M170 118L168 109M170 118L161 122M170 118L161 113M158 108L161 113M158 108L162 103M158 108L168 109M178 187L182 186M178 187L171 189M178 187L175 194M178 187L182 177M134 122L126 128M134 122L144 127M134 122L130 132M134 122L125 117M156 154L150 152M156 154L162 151M156 154L148 162M64 116L70 111M64 116L56 114M64 116L68 123M64 116L59 109M64 116L74 118M153 122L154 130M153 122L161 122M153 122L144 119M153 122L144 127M144 119L146 114M144 119L141 112M144 119L144 127M130 132L126 128M130 132L128 140M130 132L122 132M171 189L169 194M171 189L175 194M171 189L164 185M89 118L84 123M89 118L82 115M142 177L148 178M142 177L135 174M142 177L145 168M142 177L148 184M122 75L121 68M122 75L115 75M122 75L118 85M102 97L112 100M186 105L183 111M186 105L181 99M186 105L194 107M186 105L186 96M186 105L194 103M76 193L72 194M76 193L82 195M76 193L79 188M76 193L81 201M76 193L83 201M121 122L125 117M121 122L114 119M121 122L126 128M121 122L119 113M54 143L59 148M54 143L47 147M54 143L46 146M54 143L59 135M88 204L91 206M88 204L93 207M88 204L83 201M88 204L81 201M88 204L99 203M115 188L113 193M115 188L120 185M115 188L111 183M159 84L155 89M159 84L162 89M159 84L152 84M159 84L158 75M101 175L104 169M101 175L95 170M101 175L109 173M128 184L120 185M128 184L126 175M195 120L189 118M195 120L201 124M195 120L198 113M195 120L194 128M148 184L148 178M148 184L146 190M148 184L152 191M148 184L157 184M148 184L140 186M59 109L56 114M59 109L50 111M162 89L155 89M152 84L155 89M152 84L146 90M152 84L147 77M129 206L125 212M129 206L131 199M129 206L135 212M129 206L137 210M129 206L124 213M112 208L112 212M112 208L118 212M112 208L105 210M79 120L84 123M79 120L74 118M79 120L82 115M79 120L79 127M88 163L82 159M88 163L81 170M194 107L194 103M194 107L198 113M194 107L183 111M146 90L145 97M146 90L138 87M142 196L138 201M142 196L145 201M142 196L148 196M142 196L146 190M180 155L175 159M180 155L187 156M180 155L177 148M180 155L176 165M139 146L135 152M139 146L130 146M144 127L145 134M122 93L118 97M122 93L118 85M122 93L125 102M182 168L176 165M182 168L189 174M182 168L182 177M182 168L173 170M182 168L189 177M131 199L138 201M131 199L124 199M50 111L49 113M50 111L56 114M50 111L53 103M77 155L82 159M113 58L112 58M113 58L119 61M113 58L105 60M113 58L123 57M154 130L158 134M154 130L162 128M154 130L145 134M193 152L194 146M193 152L198 157M193 152L187 156M193 152L198 158M161 113L168 109M161 113L161 122M161 113L162 103M90 194L82 195M90 194L83 201M90 194L95 185M162 151L170 151M162 151L169 157M162 151L169 144M110 77L115 75M110 77L103 75M110 77L110 85M186 96L189 93M186 96L181 99M186 96L194 103M111 110L118 106M111 110L119 113M119 113L118 106M119 113L125 117M119 113L114 119M118 106L125 102M118 106L112 100M118 106L118 97M150 152L150 144M150 152L148 162M175 159L176 165M175 159L169 157M175 159L170 151M175 159L177 148M55 129L59 135M55 129L47 128M108 160L113 164M108 160L109 153M108 160L104 169M162 69L166 69M162 69L164 75M162 69L158 75M162 69L156 64M162 69L156 64M160 179L157 184M160 179L164 185M160 179L161 169M62 181L58 177M62 181L65 186M62 181L67 175M62 181L61 173M62 181L69 185M125 102L134 100M125 102L118 97M125 102L128 112M79 127L84 123M79 127L73 136M179 80L182 84M179 80L175 85M179 80L175 76M179 80L172 75M198 139L202 135M198 139L196 133M198 139L200 145M198 139L201 146M198 139L194 146M109 153L112 147M109 153L117 151M109 153L107 143M69 185L65 186M69 185L73 181M69 185L72 194M69 185L79 188M161 169L151 171M146 190L152 191M146 190L148 196M146 190L140 186M148 196L145 201M148 196L152 191M194 146L200 145M194 146L201 146M194 146L184 144M126 175L135 174M126 175L122 165M176 108L168 109M176 108L183 111M176 108L181 99M95 185L99 190M95 185L90 178M169 157L170 151M169 157L176 165M52 155L49 157M52 155L55 161M52 155L47 147M52 155L59 148M52 155L46 146M161 122L162 128M161 122L168 126M168 126L162 128M168 126L176 120M93 207L91 206M93 207L99 203M93 207L102 210M93 207L105 210M119 61L123 57M119 61L112 58M119 61L121 68M122 165L113 164M122 165L132 165M61 173L58 177M61 173L56 172M61 173L67 175M70 111L74 106M70 111L74 118M104 169L109 173M104 169L95 170M141 75L142 80M141 75L147 77M141 75L137 81M141 75L138 67M88 101L95 106M88 136L79 140M134 111L128 112M134 111L139 106M134 111L141 112M134 111L134 100M134 111L125 117M128 112L125 117M121 68L115 75M176 165L173 170M176 120L178 129M176 120L183 111M82 195L81 201M82 195L83 201M82 195L79 188M168 109L162 103M168 109L167 99M82 159L81 170M83 90L89 88M83 90L84 84M83 90L78 86M120 185L111 183M120 185L113 193M99 203L102 210M99 203L91 206M194 128L196 133M194 128L201 129M194 128L201 124M194 128L191 136M103 75L98 72M99 64L102 60M99 64L105 60M99 64L91 64M99 64L98 72M130 146L128 140M130 146L135 152M191 136L196 133M191 136L181 138M117 151L112 147M178 129L175 134M178 129L181 138M72 172L67 175M72 172L73 181M72 172L81 170M72 172L80 178M118 85L110 85M118 85L115 75M125 212L124 213M125 212L118 212M125 212L135 212M137 81L142 80M137 81L138 87M137 81L131 83M122 132L116 131M122 132L126 128M122 132L122 139M122 132L128 140M157 184L164 185M157 184L152 191M157 184L161 193M83 201L81 201M83 201L91 206M55 161L53 167M55 161L49 157M55 161L63 158M182 177L189 177M182 177L189 174M182 177L182 186M169 194L175 194M169 194L161 193M169 194L166 201M169 194L164 202M148 178L151 171M148 178L145 168M101 139L107 143M101 139L101 131M113 164L109 173M135 174L132 165M108 196L113 193M108 196L99 190M116 131L122 139M162 103L167 99M148 162L145 168M148 162L151 171M80 178L85 174M80 178L81 170M80 178L73 181M80 178L90 178M47 122L46 124M47 122L47 128M47 122L49 113M84 84L89 88M84 84L78 86M84 84L80 76M135 152L138 158M94 150L96 157M87 74L89 68M87 74L81 69M87 74L80 76M128 140L122 139M162 128L158 134M107 143L112 147M181 138L175 134M181 138L184 144M181 138L173 140M133 72L138 67M145 97L147 105M175 85L182 84M175 85L175 76M175 96L181 99M175 96L167 99M138 201L145 201M125 117L126 128M74 118L68 123M74 118L82 115M161 193L155 196M161 193L164 185M161 193L166 201M161 193L164 202M151 171L145 168M184 144L177 148M90 178L85 174M67 142L73 136M67 142L59 148M175 134L173 140M146 114L141 112M146 114L147 105M146 114L139 106M112 100L118 97M170 151L169 144M170 151L177 148M47 128L46 124M47 128L46 135M139 106L141 112M139 106L147 105M139 106L134 100M151 73L147 77M151 73L158 75M151 73L156 64M81 170L85 174M172 75L175 76M172 75L164 75M172 75L166 69M169 144L173 140M169 144L177 148M98 72L89 68M201 129L201 124M201 129L202 135M201 129L196 133M111 183L109 173M59 148L63 158M138 158L132 165M177 148L173 140M47 147L46 146M47 147L49 157M189 174L189 177M189 174L194 167M147 105L141 112M67 175L73 181M67 175L58 177M73 181L79 188M89 88L78 86M137 210L135 212M137 210L145 210M114 119L106 124M198 158L198 157M198 158L194 167M198 158L187 156M82 115L84 123M80 76L81 69M80 76L72 76M155 196L152 191M155 196L156 206M73 136L79 140M56 172L53 167M56 172L58 177M56 114L49 113M183 111L189 118M164 75L166 69M164 75L158 75M156 64L156 64M156 64L158 75M158 75L166 69M131 83L138 87M181 99L189 93M105 210L102 210M105 210L112 212M79 188L72 194M196 133L202 135M164 202L166 201M164 202L156 206M61 94L58 93M61 94L62 88M61 94L66 99M147 77L142 80M66 99L58 93M142 80L138 87M118 212L112 212M118 212L124 213M89 68L91 64M89 68L81 69M62 88L65 84M62 88L58 93M189 118L198 113M200 145L201 146M200 145L202 135M105 60L102 60M105 60L112 58M201 146L198 157M198 157L194 167M194 167L189 177M189 177L182 186M182 186L175 194M175 194L166 201M166 201L156 206M156 206L145 210M124 213L112 212M91 206L81 201M72 194L65 186M49 157L46 146M46 146L46 135M46 135L46 124M53 103L58 93M65 84L72 76M72 76L81 69M102 60L112 58M123 57L135 58M135 58L145 60M182 84L189 93M189 93L194 103M198 113L201 124" stroke="#b0ecd8" stroke-opacity="0.55" stroke-width="0.7" fill="none"/><g fill="#60e0b0" fill-opacity="0.35"><circle cx="184" cy="149" r="2.6"/><circle cx="164" cy="95" r="2.6"/><circle cx="153" cy="138" r="2.6"/><circle cx="47" cy="134" r="2.6"/><circle cx="176" cy="180" r="2.6"/><circle cx="102" cy="109" r="2.6"/><circle cx="93" cy="127" r="2.6"/><circle cx="107" cy="94" r="2.6"/><circle cx="79" cy="165" r="2.6"/><circle cx="155" cy="143" r="2.6"/><circle cx="183" cy="116" r="2.6"/><circle cx="96" cy="84" r="2.6"/><circle cx="64" cy="116" r="2.6"/><circle cx="186" cy="105" r="2.6"/><circle cx="195" cy="120" r="2.6"/><circle cx="194" cy="107" r="2.6"/><circle cx="50" cy="111" r="2.6"/><circle cx="186" cy="96" r="2.6"/><circle cx="160" cy="179" r="2.6"/><circle cx="146" cy="190" r="2.6"/><circle cx="161" cy="122" r="2.6"/><circle cx="88" cy="101" r="2.6"/><circle cx="82" cy="159" r="2.6"/><circle cx="117" cy="151" r="2.6"/><circle cx="83" cy="201" r="2.6"/><circle cx="108" cy="196" r="2.6"/><circle cx="87" cy="74" r="2.6"/><circle cx="175" cy="96" r="2.6"/><circle cx="184" cy="144" r="2.6"/><circle cx="47" cy="128" r="2.6"/><circle cx="172" cy="75" r="2.6"/><circle cx="138" cy="158" r="2.6"/><circle cx="89" cy="88" r="2.6"/><circle cx="73" cy="136" r="2.6"/><circle cx="156" cy="64" r="2.6"/><circle cx="152" cy="191" r="2.6"/><circle cx="115" cy="75" r="2.6"/><circle cx="89" cy="68" r="2.6"/></g><g fill="#e8fff6"><circle cx="184" cy="149" r="1.0"/><circle cx="88" cy="157" r="1.0"/><circle cx="139" cy="101" r="1.0"/><circle cx="164" cy="95" r="0.8"/><circle cx="105" cy="203" r="1.0"/><circle cx="101" cy="160" r="1.0"/><circle cx="153" cy="138" r="0.8"/><circle cx="169" cy="181" r="0.8"/><circle cx="139" cy="169" r="1.0"/><circle cx="47" cy="134" r="1.3"/><circle cx="170" cy="94" r="1.0"/><circle cx="86" cy="149" r="1.3"/><circle cx="176" cy="180" r="1.3"/><circle cx="107" cy="103" r="0.8"/><circle cx="81" cy="96" r="1.3"/><circle cx="102" cy="109" r="1.0"/><circle cx="185" cy="129" r="1.0"/><circle cx="79" cy="111" r="1.0"/><circle cx="93" cy="127" r="0.8"/><circle cx="154" cy="113" r="1.0"/><circle cx="192" cy="113" r="1.3"/><circle cx="107" cy="94" r="1.3"/><circle cx="159" cy="161" r="0.8"/><circle cx="91" cy="111" r="1.3"/><circle cx="79" cy="165" r="1.3"/><circle cx="96" cy="135" r="0.8"/><circle cx="82" cy="71" r="1.0"/><circle cx="155" cy="143" r="1.0"/><circle cx="96" cy="96" r="0.8"/><circle cx="102" cy="147" r="0.8"/><circle cx="183" cy="116" r="1.3"/><circle cx="122" cy="159" r="1.3"/><circle cx="70" cy="154" r="1.0"/><circle cx="96" cy="84" r="1.0"/><circle cx="166" cy="132" r="1.3"/><circle cx="178" cy="187" r="1.3"/><circle cx="64" cy="116" r="1.0"/><circle cx="130" cy="132" r="1.3"/><circle cx="142" cy="177" r="1.3"/><circle cx="186" cy="105" r="0.8"/><circle cx="54" cy="143" r="1.3"/><circle cx="159" cy="84" r="0.8"/><circle cx="195" cy="120" r="0.8"/><circle cx="162" cy="89" r="1.0"/><circle cx="112" cy="208" r="1.3"/><circle cx="194" cy="107" r="1.3"/><circle cx="180" cy="155" r="1.0"/><circle cx="122" cy="93" r="0.8"/><circle cx="50" cy="111" r="1.0"/><circle cx="154" cy="130" r="1.3"/><circle cx="90" cy="194" r="1.3"/><circle cx="186" cy="96" r="1.3"/><circle cx="118" cy="106" r="0.8"/><circle cx="55" cy="129" r="1.3"/><circle cx="160" cy="179" r="1.3"/><circle cx="79" cy="127" r="1.3"/><circle cx="109" cy="153" r="1.0"/><circle cx="146" cy="190" r="1.3"/><circle cx="124" cy="199" r="1.3"/><circle cx="95" cy="185" r="1.0"/><circle cx="161" cy="122" r="1.0"/><circle cx="119" cy="61" r="1.3"/><circle cx="70" cy="111" r="1.0"/><circle cx="88" cy="101" r="0.8"/><circle cx="128" cy="112" r="1.3"/><circle cx="176" cy="120" r="0.8"/><circle cx="82" cy="159" r="1.0"/><circle cx="99" cy="203" r="0.8"/><circle cx="99" cy="64" r="1.0"/><circle cx="117" cy="151" r="1.3"/><circle cx="118" cy="85" r="0.8"/><circle cx="59" cy="135" r="1.0"/><circle cx="83" cy="201" r="1.0"/><circle cx="169" cy="194" r="1.3"/><circle cx="101" cy="139" r="1.0"/><circle cx="108" cy="196" r="1.3"/><circle cx="148" cy="162" r="1.3"/><circle cx="84" cy="84" r="0.8"/><circle cx="87" cy="74" r="1.3"/><circle cx="107" cy="143" r="1.3"/><circle cx="145" cy="97" r="1.3"/><circle cx="175" cy="96" r="0.8"/><circle cx="125" cy="117" r="1.3"/><circle cx="110" cy="85" r="0.8"/><circle cx="184" cy="144" r="0.8"/><circle cx="95" cy="170" r="0.8"/><circle cx="146" cy="114" r="0.8"/><circle cx="47" cy="128" r="0.8"/><circle cx="118" cy="97" r="1.3"/><circle cx="81" cy="170" r="1.0"/><circle cx="172" cy="75" r="0.8"/><circle cx="98" cy="72" r="1.0"/><circle cx="111" cy="183" r="1.0"/><circle cx="138" cy="158" r="0.8"/><circle cx="47" cy="147" r="1.0"/><circle cx="67" cy="175" r="0.8"/><circle cx="89" cy="88" r="1.0"/><circle cx="114" cy="119" r="1.0"/><circle cx="80" cy="76" r="1.0"/><circle cx="73" cy="136" r="1.0"/><circle cx="56" cy="172" r="1.0"/><circle cx="183" cy="111" r="1.0"/><circle cx="156" cy="64" r="0.8"/><circle cx="78" cy="86" r="1.3"/><circle cx="131" cy="83" r="1.3"/><circle cx="152" cy="191" r="1.3"/><circle cx="196" cy="133" r="0.8"/><circle cx="61" cy="94" r="0.8"/><circle cx="115" cy="75" r="1.0"/><circle cx="173" cy="140" r="1.0"/><circle cx="66" cy="99" r="1.3"/><circle cx="89" cy="68" r="0.8"/><circle cx="79" cy="140" r="1.0"/><circle cx="105" cy="60" r="0.8"/></g><circle cx="123.5" cy="135" r="79" fill="none" stroke="#58a8a8" stroke-opacity="0.4" stroke-width="1.6" stroke-dasharray="1.5 2"/></svg>
<div class="abs" style="left:0;top:182px;width:248px;height:99px;background:rgba(46,68,150,0.68);border-top:1px solid #4a80d0;border-bottom:1px solid #4a80d0"></div>
</div>
<div class="abs" style="left:901px;top:204px;width:145px;height:32px;border:1px solid #5a8cd8"></div>
<div class="abs" style="left:874px;top:208px;width:200px;height:26px;text-align:center;font-family:'DejaVu Serif Condensed','DejaVu Serif',serif;font-weight:normal;font-size:20.5px;line-height:26px;color:#fff;-webkit-text-stroke:0.5px #fff;transform:scaleX(0.635);white-space:nowrap">MAKEUSEOF</div>
<div class="abs" style="left:879px;top:326px;width:38px;height:36px;border:1px solid #5a8cd8"></div>
<div class="abs" style="left:880px;top:327px;width:36px;height:34px;border-radius:3px;background:#4a0e26;text-align:center;font-weight:bold;font-size:22px;line-height:32px;color:#f0386a;letter-spacing:-0.8px">Id</div>
<div class="abs" style="left:864px;top:385px;width:219px;height:85px;border-top:1px solid #4a80d0;border-bottom:1px solid #4a80d0"></div>
<div class="abs" style="left:864px;top:389px;width:219px;text-align:center;font-weight:bold;font-size:19px;letter-spacing:0.9px;line-height:25px;color:#fff">How To Use<br>InDesign Master<br>Pages</div>
<div class="abs" style="left:864px;top:210px;width:219px;height:322px;border-left:1px solid #9a48f0;border-right:1px solid #9a48f0;border-top:1px solid #f048f8;border-bottom:1px solid #f048f8"></div>
<div class="abs" style="left:967px;top:210px;width:13px;height:322px;border-left:1px solid #9a48f0;border-right:1px solid #9a48f0"></div>
<div class="abs" style="left:605px;top:625px;width:496px;height:350px;background:#000"></div>
<div class="abs" style="left:601px;top:621px;width:496px;height:351px;background:#444"></div>
<div class="abs" style="left:602px;top:622px;width:247px;height:350px;background:#fff"></div>
<div class="abs" style="left:850px;top:622px;width:247px;height:350px;background:#fff"></div>
<div class="abs" style="left:602px;top:622px;width:247px;height:28px;background:#00adee"></div>
<div class="abs" style="left:850px;top:622px;width:247px;height:28px;background:#00adee"></div>
<svg class="abs" style="left:590px;top:610px" width="530" height="380" viewBox="590 610 530 380" fill="none" stroke="#4a96e8" stroke-width="1.2" stroke-dasharray="1.2 2.8">
<path d="M619 659.5H717 M619 937.5H717 M617 662L718 936 M718 662L617 936"/>
<path d="M734 659.5H832 M734 937.5H832 M732 662L833 936 M833 662L732 936"/>
<path d="M867 659.5H965 M867 937.5H965 M865 662L966 936 M966 662L865 936"/>
<path d="M982 659.5H1080 M982 937.5H1080 M980 662L1081 936 M1081 662L980 936"/>
<path d="M602 650.5H849 M850 650.5H1097" stroke="#7fd0f8"/>
<path d="M673.5 633.5H777.5V643.5H673.5Z M913.5 633.5H1033.5V643.5H913.5Z" stroke="#40a0f0" stroke-opacity="0.8"/>
</svg>
<div class="abs" style="left:680px;top:634px;width:90px;height:6px;background:#6e6e6e"></div>
<div class="abs" style="left:920px;top:634px;width:107px;height:6px;background:#6e6e6e"></div>
<div class="abs" style="left:597px;top:934px;width:48px;height:48px;border-radius:24px;background:#263f8c"></div>
<div class="abs" style="left:1054px;top:934px;width:48px;height:48px;border-radius:24px;background:#263f8c"></div>
<svg class="abs" style="left:590px;top:925px" width="530" height="65" viewBox="590 925 530 65" fill="none" stroke="#5aa0f0" stroke-width="1" stroke-dasharray="1 3"><circle cx="620.500" cy="957.500" r="24"/><circle cx="1078.500" cy="957.500" r="24"/><path d="M620 951.500H646 M620 960.500H646 M1052 951.500H1078 M1052 960.500H1078"/></svg>
<div class="abs" style="left:601px;top:934px;width:1px;height:39px;background:rgba(40,40,60,0.5)"></div>
<div class="abs" style="left:601px;top:972px;width:38px;height:1px;background:rgba(40,40,60,0.5)"></div>
<div class="abs" style="left:616px;top:636px;width:219px;height:322px;border-left:1px solid #9a48f0;border-right:1px solid #9a48f0;border-top:1px solid #f048f8;border-bottom:1px solid #f048f8"></div>
<div class="abs" style="left:719px;top:636px;width:13px;height:322px;border-left:1px solid #9a48f0;border-right:1px solid #9a48f0"></div>
<div class="abs" style="left:864px;top:636px;width:219px;height:322px;border-left:1px solid #9a48f0;border-right:1px solid #9a48f0;border-top:1px solid #f048f8;border-bottom:1px solid #f048f8"></div>
<div class="abs" style="left:967px;top:636px;width:13px;height:322px;border-left:1px solid #9a48f0;border-right:1px solid #9a48f0"></div>
<div class="abs" style="left:614px;top:949px;width:12px;font-family:'Liberation Serif',serif;font-weight:bold;font-size:13px;line-height:14px;color:#fff;text-align:center">2</div>
<div class="abs" style="left:1073px;top:949px;width:12px;font-family:'Liberation Serif',serif;font-weight:bold;font-size:13px;line-height:14px;color:#fff;text-align:center">3</div>
<div class="abs" style="left:605px;top:1051px;width:496px;height:350px;background:#000"></div>
<div class="abs" style="left:601px;top:1047px;width:496px;height:351px;background:#444"></div>
<div class="abs" style="left:602px;top:1048px;width:247px;height:350px;background:#fff"></div>
<div class="abs" style="left:850px;top:1048px;width:247px;height:350px;background:#fff"></div>
<div class="abs" style="left:602px;top:1048px;width:247px;height:28px;background:#00adee"></div>
<div class="abs" style="left:850px;top:1048px;width:247px;height:28px;background:#00adee"></div>
</div></div>

<!-- STATUS -->
<div id="status" class="abs"></div>
<div class="abs" style="left:75px;top:1053px;width:698px;height:1px;background:#a8a8a8"></div>
<div class="abs" style="left:177px;top:1054px;width:135px;height:23px;background:#424242;border:1px solid #6a6a6a;border-radius:3px"></div>
<div class="abs" style="left:284px;top:1055px;width:1px;height:21px;background:#6a6a6a"></div>
<div class="abs" style="left:182px;top:1056px;font-size:15.5px;line-height:19px;color:#f0f0f0">2</div>
<svg class="abs" style="left:75px;top:1053px" width="1623" height="25" viewBox="75 1053 1623 25" fill="none">
<g stroke="#d4d4d4" stroke-width="1.4"><path d="M87 1063l6 5.500l6-5.500"/><path d="M292.500 1063l5.800 5.500l5.800-5.500"/><path d="M599.500 1063l5.800 5.500l5.800-5.500"/><path d="M754 1063l5.800 5.500l5.800-5.500"/></g>
<g fill="#c6c6c6">
<path d="M117 1059.500h3.500v12h-3.500z M130 1059.500v12l-9-6z"/>
<path d="M158 1059.500v12l-8-6z"/>
<path d="M332.500 1059.500v12l8-6z"/>
<path d="M369 1059.500h3.500v12h-3.500z M360 1059.500v12l9-6z"/>
<path d="M420 1071h5l-2.500 3z"/>
<circle cx="408.500" cy="1065.500" r="10"/>
</g>
<path d="M403 1061h6.200v6h5.300v10h-11.500z M411 1062.300l3.200 3.200h-3.200z" fill="#535353"/>
<circle cx="642.500" cy="1065" r="8.300" fill="#3db54a"/>
<path d="M788 1061l-4 5l4 5" stroke="#5a5a5a" stroke-width="1.300"/>
<path d="M1627 1060l4 5l-4 5" stroke="#5e5e5e" stroke-width="1.300"/>
<path d="M1649.500 1058.500h21.500v15h-21.500z M1660.200 1058.500v15" stroke="#d0d0d0" stroke-width="1.600"/>
<path d="M1693 1060v1M1693 1064v1M1693 1068v1M1693 1072v1M1689 1064v1M1689 1068v1M1689 1072v1M1685 1068v1M1685 1072v1M1681 1072v1" stroke="#6e6e6e" stroke-width="1.500"/>
</svg>
<div class="abs" style="left:446px;top:1056.500px;font-size:15.500px;line-height:20px;color:#e8e8e8;white-space:nowrap">[Basic] (working)</div>
<div class="abs" style="left:659px;top:1056.500px;font-size:15.500px;letter-spacing:-0.200px;line-height:20px;color:#e8e8e8;white-space:nowrap">No errors</div>
<div class="abs" style="left:1641px;top:1053px;width:34px;height:1px;background:#e0e0e0"></div>

<!-- DOCKS -->
<div id="dockhdr" class="abs"></div>
<div id="dock1" class="abs"></div>
<div id="dock2" class="abs"></div>
<div class="abs" style="left:1758px;top:63px;width:2px;height:1014px;background:#3a3a3a"></div>
<div class="abs" style="left:1699px;top:62px;width:221px;height:1px;background:#3a3a3a"></div>
<div class="abs" style="left:1700px;top:121px;width:58px;height:2px;background:#3a3a3a"></div>
<div class="abs" style="left:1760px;top:123px;width:160px;height:2px;background:#3a3a3a"></div>
<div class="abs" style="left:1760px;top:227px;width:160px;height:2px;background:#3a3a3a"></div>
<div class="abs" style="left:1768px;top:142px;width:145px;height:35px;background:#363636;border:1px solid #484848;border-radius:4px"></div>
<svg class="abs" style="left:1699px;top:45px" width="221" height="190" viewBox="1699 45 221 190" fill="none">
<g stroke="#d8d8d8" stroke-width="1.4"><path d="M1742 50.500l-3 3l3 3M1748 50.500l-3 3l3 3M1904 50.500l-3 3l3 3M1910 50.500l-3 3l3 3"/></g>
<g stroke="#3e3e3e" stroke-width="1"><path d="M1715.5 68v6"/><path d="M1718.5 68v6"/><path d="M1721.5 68v6"/><path d="M1724.5 68v6"/><path d="M1727.5 68v6"/><path d="M1730.5 68v6"/><path d="M1733.5 68v6"/><path d="M1736.5 68v6"/><path d="M1739.5 68v6"/><path d="M1742.5 68v6"/><path d="M1826.5 68v6"/><path d="M1829.5 68v6"/><path d="M1832.5 68v6"/><path d="M1835.5 68v6"/><path d="M1838.5 68v6"/><path d="M1841.5 68v6"/><path d="M1844.5 68v6"/><path d="M1847.5 68v6"/><path d="M1850.5 68v6"/><path d="M1853.5 68v6"/><path d="M1826.5 130v6"/><path d="M1829.5 130v6"/><path d="M1832.5 130v6"/><path d="M1835.5 130v6"/><path d="M1838.5 130v6"/><path d="M1841.5 130v6"/><path d="M1844.5 130v6"/><path d="M1847.5 130v6"/><path d="M1850.5 130v6"/><path d="M1853.5 130v6"/></g>
<path d="M1731.500 86.500l13 7l-13 7l-13-7z M1722.500 99.500l9 4.800l9-4.800l4 2.200l-13 7l-13-7z" fill="#c6c6c6"/>
<g stroke="#c6c6c6" stroke-width="1.200"><path d="M1786.500 85.500l8 3.500v9l-8 4l-8-4v-9z M1778.500 89l8 3.500l8-3.500M1786.500 92.500v9.500"/><path d="M1786.500 92.500l-8-3.500v9l8 4z" fill="#7a7a7a"/></g>
<path d="M1798.500 87h6v5.500h-6z M1798.500 96h6v5.500h-6z M1778 107h27v6h-27z" fill="#c6c6c6"/><path d="M1799 108.500h5l-2.500 3z" fill="#3a3a3a"/>
<path d="M1778.500 157l6-6h5.300v20h-11.300z M1804.700 157l-6-6h-5.300v20h11.300z" fill="#c6c6c6"/><path d="M1778.500 157.500h6.500v-6.500M1804.700 157.500h-6.500v-6.500" stroke="#363636" stroke-width="1" fill="none"/><path d="M1791.600 146.200v28.700" stroke="#c6c6c6" stroke-width="2.200"/>
<path d="M1778 194h25.500v17h-25.500z" fill="#c6c6c6"/><path d="M1780 196h6v5.500h-6z" fill="#8a8a8a"/><path d="M1788 196h6v5.500h-6z" fill="#bcbcbc"/><path d="M1796 196h5.500v5.500h-5.500z" fill="#7c7c7c"/><path d="M1780 203.500h6v5.500h-6z" fill="#888"/><path d="M1788 203.500h6v5.500h-6z" fill="#999"/><path d="M1796 203.500h5.500v5.500h-5.500z" fill="#aaa"/>
</svg>
<div class="abs dk" style="left:1818px;top:89.500px">Properti...</div>
<div class="abs dk" style="left:1818px;top:152px">Pages</div>
<div class="abs dk" style="left:1818px;top:194px">Swatches</div>
<!-- PAGES PANEL -->
<div class="abs" style="left:1372px;top:121px;width:9px;height:921px;background:linear-gradient(to right,rgba(60,60,60,0),rgba(60,60,60,0.4))"></div>
<div class="abs" style="left:1379px;top:121px;width:381px;height:921px;background:#2e2e2e"></div>
<div class="abs" style="left:1381px;top:127px;width:377px;height:41px;background:#424242"></div>
<div class="abs" style="left:1381px;top:127px;width:91px;height:41px;background:#535353"></div>
<div class="abs" style="left:1580px;top:127px;width:1px;height:41px;background:#4c4c4c"></div>
<div class="abs" style="left:1381px;top:168px;width:377px;height:862px;background:#535353"></div>
<div class="abs" style="left:1381px;top:1032px;width:377px;height:9px;background:#535353"></div>
<div class="abs" style="left:1381px;top:261px;width:377px;height:3px;background:#5b5b5b"></div>
<div class="abs" style="left:1381px;top:991px;width:377px;height:1px;background:#5b5b5b"></div>
<div class="abs pt" style="left:1408px;top:138px;font-weight:bold;font-size:15.500px;color:#f2f2f2">Pages</div>
<div class="abs pt" style="left:1491px;top:138px;font-weight:bold;font-size:15.500px;color:#b2b2b2">Swatches</div>
<div class="abs pt" style="left:1386px;top:180px;font-size:15.500px">[None]</div>
<div class="abs pt" style="left:1386px;top:223px;font-size:14.700px">A-Master</div>
<div class="abs pt" style="left:1389px;top:1002px;font-size:14.500px">10 Pages in 6 Spreads</div>
<div class="abs pt" style="left:1536px;top:437px;width:40px;text-align:center;font-size:14.500px">2-3</div>
<div class="abs pt" style="left:1536px;top:533px;width:40px;text-align:center;font-size:14.500px">4-5</div>
<div class="abs pt" style="left:1536px;top:629px;width:40px;text-align:center;font-size:14.500px">6-7</div>
<div class="abs pt" style="left:1536px;top:725px;width:40px;text-align:center;font-size:14.500px">8-9</div>
<div class="abs pt" style="left:1519px;top:821px;width:40px;text-align:center;font-size:14.500px">10</div>
<svg class="abs" style="left:1381px;top:127px" width="377" height="915" viewBox="1381 127 377 915" fill="none">
<defs><pattern id="dots" x="1522" y="374" width="8" height="8" patternUnits="userSpaceOnUse"><path d="M1 1h1v1h-1z M5 3h1v1h-1z M3 5h1v1h-1z M7 7h1v1h-1z M5 7h1v1h-1z" fill="#3a8af0"/></pattern>
<pattern id="dots2" x="1675" y="217" width="6" height="6" patternUnits="userSpaceOnUse"><path d="M1 1h1v1h-1z M4 4h1v1h-1z" fill="#3a8af0"/></pattern>
<g id="sp"><rect x="1522.500" y="374.500" width="75" height="54" fill="#fff" stroke="#8c8c8c"/><path d="M1525.5 379V425M1541.5 379V425M1543.5 379V425M1558.5 379V425M1526.1 381L1540.7 423M1540.7 381L1526.1 423M1527.1 380.500H1540.7 M1527.1 423.500H1540.7M1543.6 381L1558.1 423M1558.1 381L1543.6 423M1544.6 380.500H1558.1 M1544.6 423.500H1558.1M1563.5 379V425M1578.5 379V425M1580.5 379V425M1596.5 379V425M1563.7 381L1578.3 423M1578.3 381L1563.7 423M1564.7 380.500H1578.3 M1564.7 423.500H1578.3M1581.2 381L1595.7 423M1595.7 381L1581.2 423M1582.2 380.500H1595.7 M1582.2 423.500H1595.7" stroke="#3a8af0" stroke-width="1" stroke-dasharray="1 3" fill="none" shape-rendering="crispEdges"/><path d="M1523 375.500h74" stroke="#1aa8f0" stroke-width="1"/><path d="M1539 376.500h43" stroke="#1aa8f0" stroke-width="2"/><path d="M1523 424a4 4 0 0 1 4 4h-4z M1597 424a4 4 0 0 0 -4 4h4z" fill="#263f8c"/><path d="M1559.700 366v70" stroke="#c8c8c8" stroke-width="2"/></g>
<clipPath id="spc"><rect x="1523" y="375" width="74" height="53"/></clipPath></defs>
<path d="M1393.500 148l3-3.500l3 3.500M1393.500 151.500l3 3.500l3-3.500" stroke="#b4b4b4" stroke-width="1.300"/>
<path d="M1698 143.500l5 5l-5 5M1705.500 143.500l5 5l-5 5" stroke="#d8d8d8" stroke-width="1.700"/>
<path d="M1723 139.500v16.500" stroke="#b8b8b8" stroke-width="1.500"/>
<path d="M1734 143h16M1734 146.300h16M1734 149.600h16M1734 152.900h16" stroke="#c8c8c8" stroke-width="1.200"/>
<path d="M1744 182l5-4.500l5 4.500M1744 246l5 4.500l5-4.500M1744 280l5-4.500l5 4.500M1744 980l5 4.500l5-4.500" stroke="#5e5e5e" stroke-width="1.200"/>
<rect x="1700.500" y="173.500" width="26" height="36" fill="#fff" stroke="#8c8c8c"/>
<rect x="1675.500" y="217.500" width="51" height="36" fill="#fff" stroke="#8c8c8c"/><rect x="1676" y="219" width="50" height="34" fill="url(#dots2)"/><path d="M1676 218.500h50" stroke="#1aa8f0"/><path d="M1700.500 218v35" stroke="#8c8c8c"/><path d="M1676 250a3 3 0 0 1 3 3h-3z M1726 250a3 3 0 0 0 -3 3h3z" fill="#263f8c"/>
<path d="M1559.500 270v70" stroke="#c8c8c8" stroke-width="1.500"/>
<path d="M1570.500 270h15.500l-7.750 7.300z" fill="#c6c6c6"/>
<rect x="1560.500" y="278.500" width="37" height="54" fill="#2a5a9e" stroke="#8c8c8c"/>
<rect x="1561" y="322" width="36" height="10" fill="#9cc6f6"/>
<circle cx="1578.500" cy="298" r="11.500" fill="#3a7aa8" fill-opacity="0.450"/><path d="M1573 293q3-3 6-1M1575 298q4 1 5 4q0 3-2 5M1581 301q3 1 2 4" stroke="#8aa860" stroke-opacity="0.700" stroke-width="1.300" fill="none"/><circle cx="1578.500" cy="298" r="11" fill="none" stroke="#5aa0c0" stroke-opacity="0.400" stroke-dasharray="1 1.500"/>
<rect x="1563" y="298" width="5.500" height="5.500" fill="#3c3a84"/>
<path d="M1572 280h12v2h-12z M1569 309h18v2h-18z M1565 313.500h25v2.500h-25z M1574 317.500h8v2.500h-8z" fill="#a8d0fa"/>
<rect x="1567" y="340" width="18" height="21" fill="#2f8ae8"/>
<use href="#sp"/><use href="#sp" y="96"/><use href="#sp" y="192"/><use href="#sp" y="288"/>
<rect x="1522.500" y="758.500" width="37" height="54" fill="#263f8c" stroke="#8c8c8c"/><path d="M1559.700 750v70" stroke="#c8c8c8" stroke-width="2"/>
<g stroke="#c8c8c8" stroke-width="1.400"><path d="M1626 1009v-6h6l4 4v9h-10 M1632 1003v4h4"/><path d="M1619.500 1008.500h12v8h-12z" fill="#535353"/><rect x="1666.700" y="1002.700" width="15.600" height="15.600"/><path d="M1674.500 1006.500v8M1670.500 1010.500h8" stroke-width="1.200"/><path d="M1706 1005.500h17M1711.500 1005v-2.500h6v2.500M1708 1006l1 12.500h11l1-12.500M1712 1008.500v8M1714.700 1008.500v8M1717.300 1008.500v8" stroke-width="1.300"/></g>
<path d="M1639.500 1015.500h4l-2 2.500z" fill="#c8c8c8"/>
<g stroke="#3e3e3e" stroke-width="1"><path d="M1555.5 1033.500v5"/><path d="M1558.5 1033.500v5"/><path d="M1561.5 1033.500v5"/><path d="M1564.5 1033.500v5"/><path d="M1567.5 1033.500v5"/><path d="M1570.5 1033.500v5"/><path d="M1573.5 1033.500v5"/><path d="M1576.5 1033.500v5"/><path d="M1579.5 1033.500v5"/><path d="M1582.5 1033.500v5"/></g>
</svg>
<div class="abs" style="left:1523px;top:377px;font-size:15px;line-height:15px;color:#000">A</div>
<div class="abs" style="left:1581px;top:377px;font-size:15px;line-height:15px;color:#000">A</div>
<div class="abs" style="left:1523px;top:473px;font-size:15px;line-height:15px;color:#000">A</div>
<div class="abs" style="left:1581px;top:473px;font-size:15px;line-height:15px;color:#000">A</div>
<div class="abs" style="left:1523px;top:569px;font-size:15px;line-height:15px;color:#000">A</div>
<div class="abs" style="left:1581px;top:569px;font-size:15px;line-height:15px;color:#000">A</div>
<div class="abs" style="left:1523px;top:665px;font-size:15px;line-height:15px;color:#000">A</div>
<div class="abs" style="left:1581px;top:665px;font-size:15px;line-height:15px;color:#000">A</div>
<div class="abs" style="left:1567px;top:341px;width:18px;text-align:center;font-family:'Liberation Serif',serif;font-weight:bold;font-size:17px;line-height:20px;color:#fff">1</div>
<div class="abs" style="left:1675px;top:1042px;width:22px;height:11px;background:#4c4c4c"></div>
<svg class="abs" style="left:1675px;top:1042px" width="22" height="11" viewBox="0 0 22 11" fill="none"><path d="M7.500 1l3.500 3l3.500-3" stroke="#9a9a9a" stroke-width="1.200"/></svg>

<!-- TOOLS PANEL -->
<div class="abs" style="left:75px;top:113px;width:6px;height:940px;background:linear-gradient(to right,rgba(70,70,70,0.6),rgba(70,70,70,0))"></div>
<div class="abs" style="left:15px;top:95px;width:60px;height:19px;background:#424242;border-radius:5px 5px 0 0"></div>
<div class="abs" style="left:15px;top:114px;width:60px;height:963px;background:#535353;border-left:1px solid #4a4a4a;border-right:1px solid #444"></div>
<div class="abs" style="left:16px;top:136px;width:58px;height:1px;background:#4a4a4a"></div>
<div class="abs" style="left:30px;top:121px;width:29px;height:6px;background:repeating-linear-gradient(to right,#3e3e3e 0 1px,transparent 1px 3px)"></div>
<div class="abs" style="left:25px;top:139px;width:41px;height:33px;background:#2f2f2f;border-radius:3px"></div>
<div class="abs" style="left:25px;top:924px;width:20px;height:18px;background:#3a3a3a;border-radius:3px"></div>
<div class="abs" style="left:25px;top:953px;width:41px;height:32px;background:#343434;border-radius:3px"></div>
<div class="abs" style="left:25px;top:1037px;width:41px;height:32px;background:#343434;border-radius:3px"></div>
<svg class="abs" style="left:15px;top:95px" width="60" height="983" viewBox="15 95 60 983" fill="none">
<g stroke="#d0d0d0" stroke-width="1.3"><path d="M30.5 103.2L33.3 106L30.5 108.8M35.5 103.2L38.3 106L35.5 108.8"/><path d="M56.5 101.5L64.5 109.5M64.5 101.5L56.5 109.5" stroke-width="1.6"/></g>
<g fill="#c4c4c4">
<!-- corner triangles -->
<path d="M65 309.5V315.5H59Z M65 350V356H59Z M65 422V428H59Z M65 458V464H59Z M65 494V500H59Z M65 530V536H59Z M65 607V613H59Z M65 755V761H59Z M65 978V984H59Z M65 1022V1028H59Z M65 1062V1068H59Z"/>
<!-- direct selection -->
<path d="M38 179.5L56.3 196.2H46L38 205Z"/>
<!-- page tool arrow -->
<path d="M50 224.5L58.5 233H53.5L50 237Z"/>
<!-- gap tool -->
<path d="M32 253h3v21h-3z M56 253h3v21h-3z M36 263.5l5-4.5v3h9v-3l5 4.5l-5 4.5v-3h-9v3z"/>
<!-- content collector -->
<path d="M35 296.5h3v12h15v-12h3v15h-21z"/>
<path d="M40 299h2.5v2.500h-2.500z M49 299h2.500v2.500h-2.500z M40 303.500h2.500v2.500h-2.500z M44.500 303.500h2.500v2.500h-2.500z M49 303.500h2.500v2.500h-2.500z"/>
<path d="M38 289.500l1.800-1.800l5 5l2.200-2.200v6h-6l2.200-2.200z"/>
<!-- T -->
<path d="M35 330h21v6h-2.500v-3h-6.300v15h2.800v2.500h-9v-2.500h2.800v-15h-6.300v3h-2.500z"/>
<!-- pen -->
<path d="M49.500 401l7.500 7.500l-4 4l-7.500-7.500z"/>
<path d="M44.500 406l7 7l-3 6l-15 5.800l6.800-6.800a1.600 1.600 0 1 0-1.200-1.200l-6.300 6.300l6-13.800z"/>
<!-- pencil -->
<path d="M50.500 437l7 7l-3.200 3.200l-7-7z"/>
<path d="M46 441.500l7 7l-11.500 10.500l-8.500 2l2.300-8.700z M37 452.500l-1.700 5.700l5.800-1.500z" fill-rule="evenodd"/>
<!-- note -->
<path d="M35 699h21v15l-6 6h-15z M39.500 703h12v1.500h-12z M39.500 707h12v1.500h-12z M39.500 711h6.500v1.500h-6.500z" fill-rule="evenodd"/>
<path d="M51 721v-5.500h5.500z" fill="#535353"/>
<path d="M51.500 720v-4.500h4.500z"/>
<!-- hand -->
<path d="M41 792c-2-3-5-7-7.500-9.500c-1-1.500 0.800-3 2.500-1.800l4.500 4l-1.800-11.500c-0.300-2 2.300-2.400 2.800-0.500l1.700 8.500l0.300-10.200c0-2 2.800-2 2.900 0l0.400 10l1.800-8.600c0.500-1.900 3-1.400 2.700 0.500l-1.200 9.600l3.500-6.500c1-1.700 3.300-0.600 2.500 1.200c-2.500 5.500-3.500 9-5 13.500c-1 2.600-3 3.300-6 3.300c-2.600 0-4.600-0.400-6.100-2z"/>
<!-- swap arrow -->
<path d="M50.500 851l5.500-4.300v8.600z M58.800 858h8.600l-4.300 5z"/><path d="M55.500 851h4.500a3.100 3.100 0 0 1 3.100 3.100v4.500" fill="none" stroke="#c4c4c4" stroke-width="2.100"/>
<!-- view mode -->
<path d="M41.500 1010.500h14v8.500h-14z"/>
</g>
<g stroke="#c4c4c4">
<!-- selection tool -->
<path d="M38.700 145L55 161H45.600L38.700 168.600Z" stroke-width="1.4"/>
<!-- page tool -->
<path d="M49 235.500H37.500V216.300H47.500L53.200 222V226.500 M47.500 216.500V222H53" stroke-width="1.500"/>
<!-- line -->
<path d="M35 386.500L56 366" stroke-width="2"/>
<!-- rect frame -->
<path d="M34.300 475h23v19.500h-23z M34.300 475l23 19.500M57.300 475l-23 19.500" stroke-width="1.500"/>
<!-- rectangle -->
<path d="M34.300 510.800h23v19.500h-23z" stroke-width="1.500" fill="#6b6b6b"/>
<!-- scissors -->
<circle cx="54.500" cy="552.500" r="3.800" stroke-width="1.600"/><circle cx="54.500" cy="567.800" r="3.800" stroke-width="1.600"/>
<path d="M33.500 555l18 9.500M33.500 565.500l18-10" stroke-width="2.600"/>
<!-- rotate -->
<path d="M39 589.500a11 11 0 0 1 17.300 11.500" stroke-width="2.200"/>
<path d="M55.500 603.500a11 11 0 0 1-21-3" stroke-width="1.500" stroke-dasharray="1.300 2.300"/>
<!-- eyedropper -->
<path d="M-2.600 -3V10.500a2.600 3.200 0 0 0 5.200 0V-3" stroke-width="1.500" transform="translate(45.300 745.700) rotate(45)"/>
<!-- zoom -->
<circle cx="42.500" cy="814.500" r="8.300" stroke-width="1.800"/><path d="M48.500 820.500L56.500 828.500" stroke-width="2.600" stroke-linecap="round"/>
<!-- container format -->
<rect x="29.500" y="928.500" width="10.500" height="9.500" stroke-width="1.400"/>
<!-- view mode guides -->
<path d="M37 1013h3M37 1017.500h3M41 1006v3M46 1006v3M50.500 1006v3M55 1006v3M37.500 1009v-3h3" stroke-width="1.200"/>
<!-- screen mode -->
<rect x="38" y="1045" width="16.500" height="16.500" stroke-width="1.500"/><rect x="41.500" y="1049.500" width="6.500" height="4.500" stroke-width="1.300"/><rect x="44.500" y="1053" width="6.500" height="4.500" stroke-width="1.300" fill="#343434"/>
</g>
<!-- rotate arrowhead -->
<path d="M33.500 583.500l1.200 10.500l8.300-2.500z" fill="#c4c4c4"/>
<!-- eyedropper bulb -->
<g transform="translate(45.300 745.700) rotate(45)" fill="#c4c4c4"><rect x="-2.800" y="-15.500" width="5.600" height="9" rx="2.800"/><rect x="-5.300" y="-8.300" width="10.600" height="3"/><rect x="-3.300" y="-5.500" width="6.600" height="3"/></g>
<!-- gradient swatch -->
<defs><linearGradient id="tg1" x1="0" x2="1"><stop offset="0" stop-color="#b4b4b4"/><stop offset="1" stop-color="#484848"/></linearGradient>
<linearGradient id="tg2" x1="0" x2="0" y1="0" y2="1"><stop offset="0" stop-color="#c8c8c8" stop-opacity="0"/><stop offset="1" stop-color="#c8c8c8"/></linearGradient></defs>
<rect x="33.700" y="623.700" width="23" height="20" fill="url(#tg1)" stroke="#c8c8c8" stroke-width="1.400"/>
<!-- gradient feather -->
<rect x="33.700" y="659.700" width="23" height="20" fill="#909090" stroke="#c8c8c8" stroke-width="1.400"/>
<path d="M38.500 661h4.500v4h-4.500z M47.500 661h4.500v4h-4.500z M34.500 665h4v4h-4z M43 665h4.500v4h-4.500z M52 665h4v4h-4z M38.500 669h4.500v4h-4.500z M47.500 669h4.500v4h-4.500z" fill="#585858"/>
<rect x="34.400" y="660.400" width="21.600" height="18.600" fill="url(#tg2)"/>
<!-- default fill/stroke mini -->
<rect x="29.500" y="848.500" width="11.500" height="11" fill="#1e1e1e" stroke="#8a8a8a" stroke-width="1"/><rect x="33" y="852" width="4.500" height="4.500" fill="#535353" stroke="#bbb" stroke-width="0.800"/>
<rect x="23.500" y="843.500" width="11.500" height="11" fill="#f2f2f2" stroke="#8a8a8a" stroke-width="1"/><path d="M24.500 853.500L34 844.500" stroke="#ff2020" stroke-width="1.300"/>
<!-- stroke swatch -->
<path d="M38 883h29v29h-29z M46 891v12.500h13v-12.500z" fill="#000" fill-rule="evenodd"/>
<!-- fill swatch -->
<rect x="24" y="869" width="29.500" height="29" fill="#fff"/><path d="M25.500 896.500L51.500 871" stroke="#ff0000" stroke-width="2.200"/>
<!-- apply none -->
<rect x="33.500" y="958.500" width="23.500" height="20" fill="#fff" stroke="#bdbdbd" stroke-width="1"/><path d="M35 977L55.500 960.500" stroke="#ff0000" stroke-width="1.800"/>
</svg>
<div class="abs" style="left:50px;top:922px;width:18px;text-align:center;font-family:'Liberation Serif',serif;font-weight:bold;font-size:19px;line-height:22px;color:#c4c4c4">T</div>


<div id="bottomline" class="abs"></div>
<div class="abs" style="left:0;top:1078px;width:60px;height:2px;background:#f2f2f2"></div>
</div>
</body>
</html>
